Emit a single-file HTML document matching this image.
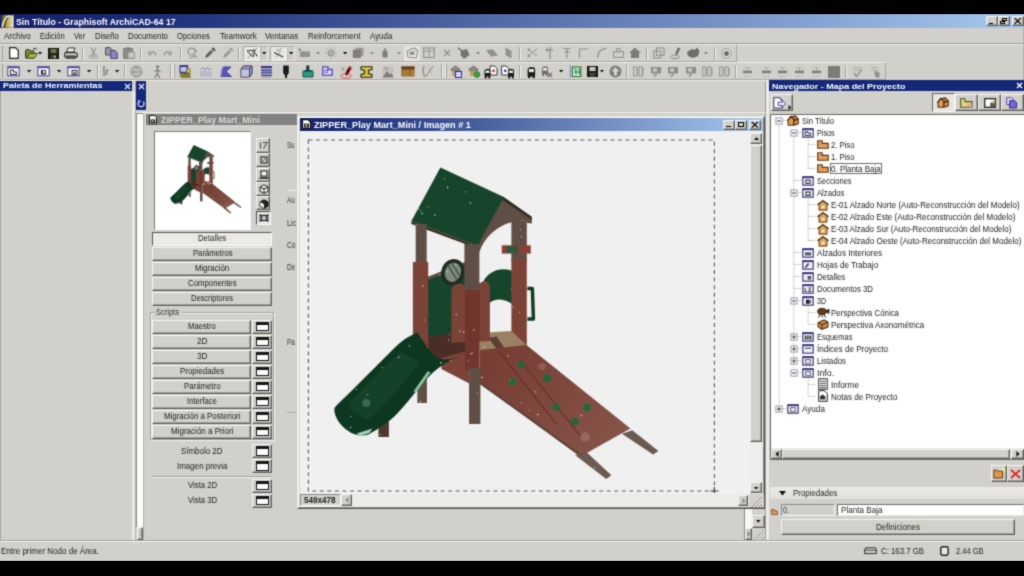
<!DOCTYPE html>
<html><head><meta charset="utf-8"><title>ArchiCAD</title>
<style>
html,body{margin:0;padding:0;background:#000;}
body{width:1024px;height:576px;position:relative;overflow:hidden;font-family:"Liberation Sans",sans-serif;}
.b{position:absolute;box-sizing:border-box;}
.t{position:absolute;white-space:nowrap;line-height:1;transform-origin:0 0;display:block;}
.raised{background:#d2d0cb;border:1px solid;border-color:#f4f4f2 #5e5e5a #5e5e5a #f4f4f2;box-shadow:inset -1px -1px 0 #a09e98;}
.sunk{border:1px solid;border-color:#7a7a76 #f8f8f6 #f8f8f6 #7a7a76;}
.sep{border-left:1px solid #a09e98;border-right:1px solid #f2f2f0;width:2px;}
#w{position:absolute;left:0;top:0;width:1024px;height:576px;overflow:hidden;filter:url(#blr);}
</style></head><body><svg width="0" height="0" style="position:absolute"><filter id="blr" x="0" y="0" width="1" height="1" color-interpolation-filters="sRGB"><feConvolveMatrix order="3" kernelMatrix="0.03 0.11 0.03 0.11 0.44 0.11 0.03 0.11 0.03" edgeMode="duplicate" preserveAlpha="true"/></filter></svg><div id="w">
<div class="b " style="left:0.0px;top:14.2px;width:1024.0px;height:546.8px;background:#d2d0cb"></div>
<div class="b " style="left:0.0px;top:14.2px;width:1024.0px;height:13.6px;background:linear-gradient(90deg,#171f6a 0%,#1b2c78 14%,#a6c8ee 100%)"></div>
<svg class="b" style="left:1.0px;top:15.0px" width="13" height="13" viewBox="0 0 13 13"><defs><linearGradient id="lg1" x1="0" x2="1" y1="0" y2="0"><stop offset="0" stop-color="#4a4a20"/><stop offset=".45" stop-color="#b8a850"/><stop offset="1" stop-color="#ece8d4"/></linearGradient></defs><rect x=".5" y=".3" width="12.2" height="12.4" fill="url(#lg1)"/><path d="M1.2 12.4 C2 6.5 4.5 2.2 8.4 .8" stroke="#f4f2ea" stroke-width="1.5" fill="none"/><path d="M3.4 12.4 C3.8 7.5 5.4 4 7.4 2.4" stroke="#4a3a1a" stroke-width="1.2" fill="none"/></svg>
<span class="t" style="left:15.5px;top:17px;font-size:9px;line-height:10px;color:#fff;font-weight:bold;transform:scaleX(0.969);">Sin Título - Graphisoft ArchiCAD-64 17</span>
<div class="b raised" style="left:986.0px;top:16.2px;width:11.6px;height:10.3px;"></div>
<div class="b " style="left:989.0px;top:22.7px;width:4.1px;height:1.2px;background:#000"></div>
<div class="b raised" style="left:997.8px;top:16.2px;width:12.2px;height:10.3px;"></div>
<div class="b " style="left:1002.3px;top:18.2px;width:5.2px;height:3.3px;border:1px solid #000;border-top-width:1.6px"></div>
<div class="b " style="left:1000.3px;top:20.7px;width:4.7px;height:3.3px;border:1px solid #000;border-top-width:1.6px;background:#d2d0cb"></div>
<div class="b raised" style="left:1011.8px;top:16.2px;width:11.8px;height:10.3px;"></div>
<svg class="b" style="left:1011.8px;top:16.2px" width="11.8" height="10.3" viewBox="0 0 11.8 10.3"><path d="M2.7 2.1500000000000004 L8.7 7.75 M8.7 2.1500000000000004 L2.7 7.75" stroke="#000" stroke-width="1.2" fill="none"/></svg>
<span class="t" style="left:4.3px;top:31px;font-size:9.2px;line-height:10px;color:#242424;transform:scaleX(0.867);">Archivo</span>
<span class="t" style="left:40.0px;top:31px;font-size:9.2px;line-height:10px;color:#242424;transform:scaleX(0.822);">Edición</span>
<span class="t" style="left:73.8px;top:31px;font-size:9.2px;line-height:10px;color:#242424;transform:scaleX(0.811);">Ver</span>
<span class="t" style="left:94.7px;top:31px;font-size:9.2px;line-height:10px;color:#242424;transform:scaleX(0.835);">Diseño</span>
<span class="t" style="left:128.0px;top:31px;font-size:9.2px;line-height:10px;color:#242424;transform:scaleX(0.850);">Documento</span>
<span class="t" style="left:177.3px;top:31px;font-size:9.2px;line-height:10px;color:#242424;transform:scaleX(0.846);">Opciones</span>
<span class="t" style="left:219.5px;top:31px;font-size:9.2px;line-height:10px;color:#242424;transform:scaleX(0.878);">Teamwork</span>
<span class="t" style="left:265.4px;top:31px;font-size:9.2px;line-height:10px;color:#242424;transform:scaleX(0.865);">Ventanas</span>
<span class="t" style="left:308.0px;top:31px;font-size:9.2px;line-height:10px;color:#242424;transform:scaleX(0.878);">Reinforcement</span>
<span class="t" style="left:370.0px;top:31px;font-size:9.2px;line-height:10px;color:#242424;transform:scaleX(0.864);">Ayuda</span>
<div class="b " style="left:0.0px;top:43.0px;width:1024.0px;height:1.0px;background:#9c9a94"></div>
<div class="b " style="left:0.0px;top:44.0px;width:1024.0px;height:1.0px;background:#ecebe7"></div>
<div class="b " style="left:0.0px;top:61.0px;width:736.0px;height:1.0px;background:#a8a6a0"></div>
<div class="b " style="left:0.0px;top:62.0px;width:736.0px;height:1.0px;background:#eeede9"></div>
<div class="b " style="left:736.0px;top:45.0px;width:1.0px;height:17.0px;background:#a8a6a0"></div>
<div class="b " style="left:737.0px;top:62.2px;width:148.0px;height:1.0px;background:#e9e8e4"></div>
<div class="b " style="left:0.0px;top:79.0px;width:885.0px;height:1.0px;background:#a8a6a0"></div>
<div class="b " style="left:885.0px;top:63.0px;width:1.0px;height:17.0px;background:#a8a6a0"></div>
<div class="b " style="left:0.0px;top:80.0px;width:1024.0px;height:0.6px;background:#eeede9"></div>
<div class="b " style="left:1022.8px;top:28.0px;width:1.2px;height:52.0px;background:#b4b2ac"></div>
<div class="b " style="left:1.5px;top:46.0px;width:1.5px;height:14.0px;background:#f2f2f0;border-right:1px solid #a09e98"></div>
<div class="b " style="left:1.5px;top:64.0px;width:1.5px;height:14.0px;background:#f2f2f0;border-right:1px solid #a09e98"></div>
<div class="b sep" style="left:82.0px;top:46.5px;width:2.0px;height:13.0px;"></div>
<div class="b sep" style="left:140.0px;top:46.5px;width:2.0px;height:13.0px;"></div>
<div class="b sep" style="left:180.0px;top:46.5px;width:2.0px;height:13.0px;"></div>
<div class="b sep" style="left:238.0px;top:46.5px;width:2.0px;height:13.0px;"></div>
<div class="b sep" style="left:519.0px;top:46.5px;width:2.0px;height:13.0px;"></div>
<div class="b sep" style="left:646.0px;top:46.5px;width:2.0px;height:13.0px;"></div>
<div class="b sep" style="left:714.0px;top:46.5px;width:2.0px;height:13.0px;"></div>
<div class="b sep" style="left:97.0px;top:64.5px;width:2.0px;height:13.0px;"></div>
<div class="b sep" style="left:124.0px;top:64.5px;width:2.0px;height:13.0px;"></div>
<div class="b sep" style="left:170.0px;top:64.5px;width:2.0px;height:13.0px;"></div>
<div class="b sep" style="left:441.0px;top:64.5px;width:2.0px;height:13.0px;"></div>
<div class="b sep" style="left:519.0px;top:64.5px;width:2.0px;height:13.0px;"></div>
<div class="b sep" style="left:626.0px;top:64.5px;width:2.0px;height:13.0px;"></div>
<div class="b sep" style="left:735.0px;top:64.5px;width:2.0px;height:13.0px;"></div>
<div class="b sep" style="left:845.0px;top:64.5px;width:2.0px;height:13.0px;"></div>
<div class="b " style="left:173.0px;top:64.0px;width:2.0px;height:14.0px;background:#f2f2f0;border-right:1px solid #a09e98"></div>
<div class="b " style="left:445.0px;top:64.0px;width:2.0px;height:14.0px;background:#f2f2f0;border-right:1px solid #a09e98"></div>
<svg class="b" style="left:9.0px;top:47.0px" width="10" height="12" viewBox="0 0 10 12"><path d="M.7 .7 L6.5 .7 L9.3 3.5 L9.3 11.3 L.7 11.3 Z" fill="#fff" stroke="#222" stroke-width="1.2"/></svg>
<svg class="b" style="left:25.0px;top:47.0px" width="13" height="12" viewBox="0 0 13 12"><path d="M.5 4 L.5 11 L9 11 L9 4 L5 4 L4 2.5 L1.5 2.5 Z" fill="#7a8a30" stroke="#3a4018" stroke-width="1"/><path d="M2 11 L4.5 6.5 L12.5 6.5 L9.5 11 Z" fill="#a8b848" stroke="#3a4018" stroke-width=".9"/><path d="M8 2.5 C9.5 .8 11 1 11.8 2.6" stroke="#222" fill="none" stroke-width="1"/></svg>
<svg class="b" style="left:38.4px;top:52.2px" width="4.2" height="2.52" viewBox="0 0 4.2 2.52"><path d="M0 0 L4.2 0 L2.1 2.52 Z" fill="#111"/></svg>
<svg class="b" style="left:48.0px;top:47.5px" width="11" height="11" viewBox="0 0 11 11"><rect x=".5" y=".5" width="10" height="10" fill="#20221a" stroke="#111"/><rect x="2.5" y="1" width="6" height="4" fill="#6e7a3a"/><rect x="3" y="7" width="5" height="3.5" fill="#444a30"/><rect x="6.3" y="7.6" width="1.3" height="2.4" fill="#d0d0c0"/></svg>
<svg class="b" style="left:64.0px;top:47.0px" width="14" height="12" viewBox="0 0 14 12"><path d="M4 1 L11 1 L9.5 5 L2.5 5 Z" fill="#f4f4f4" stroke="#222" stroke-width=".9"/><path d="M1 5.5 L12.5 5.5 L13.3 7 L13.3 10 L.7 10 L.7 7 Z" fill="#b8b8b4" stroke="#222" stroke-width="1"/><rect x="2.5" y="9" width="9" height="2.3" fill="#555" stroke="#222" stroke-width=".6"/></svg>
<svg class="b" style="left:89.0px;top:47.0px" width="9" height="12" viewBox="0 0 9 12"><path d="M2 .5 L6 8 M7 .5 L3 8" stroke="#939190" stroke-width="1.1" fill="none"/><circle cx="2.4" cy="9.6" r="1.7" fill="none" stroke="#939190" stroke-width="1"/><circle cx="6.6" cy="9.6" r="1.7" fill="none" stroke="#939190" stroke-width="1"/></svg>
<svg class="b" style="left:105.0px;top:47.0px" width="13" height="12" viewBox="0 0 13 12"><path d="M.6 .6 L5 .6 L7 2.6 L7 8 L.6 8 Z" fill="#9c9aa8" stroke="#444" stroke-width=".9"/><path d="M5.6 3.6 L10 3.6 L12.3 5.8 L12.3 11.4 L5.6 11.4 Z" fill="#8a88c0" stroke="#3a3a70" stroke-width=".9"/></svg>
<svg class="b" style="left:123.0px;top:47.0px" width="12" height="12" viewBox="0 0 12 12"><rect x=".6" y="1.6" width="9" height="9.6" fill="#8e8c88" stroke="#777" stroke-width=".9"/><rect x="3" y=".5" width="4" height="2" fill="#777"/><rect x="5" y="5" width="6.4" height="6.4" fill="#c8c6c2" stroke="#888" stroke-width=".8"/></svg>
<svg class="b" style="left:147.0px;top:49.0px" width="10" height="8" viewBox="0 0 10 8"><path d="M2 2 L2 5.5 L5.5 5.5" stroke="#939190" fill="none" stroke-width="1.1"/><path d="M2 5.5 C4 1.5 8.5 2 8.8 6.5" stroke="#939190" fill="none" stroke-width="1.2"/></svg>
<svg class="b" style="left:163.0px;top:49.0px" width="10" height="8" viewBox="0 0 10 8"><path d="M8 2 L8 5.5 L4.5 5.5" stroke="#939190" fill="none" stroke-width="1.1"/><path d="M8 5.5 C6 1.5 1.5 2 1.2 6.5" stroke="#939190" fill="none" stroke-width="1.2"/></svg>
<svg class="b" style="left:187.0px;top:47.0px" width="11" height="12" viewBox="0 0 11 12"><circle cx="4.5" cy="4.5" r="3.4" fill="none" stroke="#939190" stroke-width="1.1"/><path d="M6.5 7 L10 11 M2 11 L9 9 M8 2 L10 5" stroke="#939190" stroke-width="1.1"/></svg>
<svg class="b" style="left:204.0px;top:47.0px" width="12" height="12" viewBox="0 0 12 12"><path d="M1 11 L2 8 L7 3 L9 5 L4 10 Z" fill="#5c5a58"/><path d="M7 1.5 L10.5 5 L11.5 2.5 L9.5 .5 Z" fill="#5c5a58"/></svg>
<svg class="b" style="left:222.0px;top:47.0px" width="11" height="12" viewBox="0 0 11 12"><path d="M1 11 L2 8 L7 3 L9 5 L4 10 Z" fill="#9a9894"/><path d="M7 1.5 L10.5 5 L11 2.5 L9.5 .8 Z" fill="#9a9894"/></svg>
<div class="b " style="left:243.0px;top:45.5px;width:17.0px;height:15.0px;background:#e6e5e2;border:1px solid;border-color:#a8a6a0 #f4f4f2 #f4f4f2 #a8a6a0"></div>
<div class="b " style="left:260.0px;top:45.5px;width:8.0px;height:15.0px;background:#cecCc6;border:1px solid;border-color:#b4b2ac #e8e7e3 #e8e7e3 #b4b2ac"></div>
<div class="b " style="left:270.0px;top:45.5px;width:17.0px;height:15.0px;background:#e6e5e2;border:1px solid;border-color:#a8a6a0 #f4f4f2 #f4f4f2 #a8a6a0"></div>
<div class="b " style="left:287.0px;top:45.5px;width:8.0px;height:15.0px;background:#cecCc6;border:1px solid;border-color:#b4b2ac #e8e7e3 #e8e7e3 #b4b2ac"></div>
<svg class="b" style="left:246.0px;top:47.0px" width="13" height="12" viewBox="0 0 13 12"><path d="M1 4 L9 3 L7 10 Z" fill="none" stroke="#333" stroke-width="1"/><path d="M2 11 L11 1 M6 5 L11 8" stroke="#555" stroke-width=".9" stroke-dasharray="1.5 1"/><path d="M9.5 5.5 L11.5 9.5 L10 9 Z" fill="#111"/></svg>
<svg class="b" style="left:261.9px;top:52.2px" width="4.2" height="2.52" viewBox="0 0 4.2 2.52"><path d="M0 0 L4.2 0 L2.1 2.52 Z" fill="#111"/></svg>
<svg class="b" style="left:272.0px;top:47.0px" width="13" height="12" viewBox="0 0 13 12"><path d="M2 5.5 L11 10" stroke="#333" stroke-width="1.1"/><path d="M4 10 L9 4" stroke="#777" stroke-width=".8"/><path d="M4.5 2.5 L6.5 4 L9.5 1" stroke="#777" fill="none" stroke-width=".9"/></svg>
<svg class="b" style="left:288.9px;top:52.2px" width="4.2" height="2.52" viewBox="0 0 4.2 2.52"><path d="M0 0 L4.2 0 L2.1 2.52 Z" fill="#111"/></svg>
<svg class="b" style="left:298.0px;top:47.0px" width="13" height="12" viewBox="0 0 13 12"><rect x="2" y="4.5" width="10" height="5.5" fill="#939190"/><rect x=".5" y="1.5" width="2.5" height="2.5" fill="#939190"/></svg>
<svg class="b" style="left:316.0px;top:52.3px" width="4.0" height="2.4000000000000004" viewBox="0 0 4.0 2.4000000000000004"><path d="M0 0 L4.0 0 L2.0 2.4000000000000004 Z" fill="#8a8884"/></svg>
<svg class="b" style="left:325.0px;top:47.0px" width="12" height="12" viewBox="0 0 12 12"><circle cx="6" cy="6" r="3" fill="none" stroke="#939190" stroke-width="1"/><path d="M6 0 L6 12 M0 6 L12 6 M1.8 1.8 L10.2 10.2 M10.2 1.8 L1.8 10.2" stroke="#939190" stroke-width=".8" stroke-dasharray="2 1.2"/></svg>
<svg class="b" style="left:342.9px;top:52.2px" width="4.2" height="2.52" viewBox="0 0 4.2 2.52"><path d="M0 0 L4.2 0 L2.1 2.52 Z" fill="#111"/></svg>
<svg class="b" style="left:352.0px;top:47.0px" width="12" height="12" viewBox="0 0 12 12"><rect x="3.5" y=".8" width="8" height="8" fill="#9a9894"/><rect x=".8" y="2.8" width="8.2" height="8.2" fill="#807e7a"/></svg>
<svg class="b" style="left:370.0px;top:52.3px" width="4.0" height="2.4000000000000004" viewBox="0 0 4.0 2.4000000000000004"><path d="M0 0 L4.0 0 L2.0 2.4000000000000004 Z" fill="#8a8884"/></svg>
<svg class="b" style="left:382.0px;top:48.0px" width="6" height="10" viewBox="0 0 6 10"><rect x="1.8" y="0" width="2.4" height="3" fill="#939190"/><rect x=".5" y="3" width="5" height="6.5" fill="#7e7c78"/></svg>
<svg class="b" style="left:397.0px;top:52.3px" width="4.0" height="2.4000000000000004" viewBox="0 0 4.0 2.4000000000000004"><path d="M0 0 L4.0 0 L2.0 2.4000000000000004 Z" fill="#8a8884"/></svg>
<div class="b " style="left:404.0px;top:45.5px;width:16.0px;height:15.0px;background:#e4e3df"></div>
<svg class="b" style="left:406.0px;top:47.0px" width="13" height="12" viewBox="0 0 13 12"><path d="M1 4 L8 1 L12 4 L10 11 L2 10 Z" fill="none" stroke="#939190" stroke-width="1.1"/><path d="M3 5 L9 4 L8 8 L4 8 Z" fill="#939190"/></svg>
<svg class="b" style="left:423.0px;top:47.0px" width="12" height="12" viewBox="0 0 12 12"><rect x=".6" y="1" width="10.8" height="9.5" fill="none" stroke="#939190" stroke-width="1.1"/><path d="M6 1 L6 10.5 M.6 4 L11.4 4" stroke="#939190" stroke-width="1"/></svg>
<svg class="b" style="left:443.0px;top:49.0px" width="8" height="8" viewBox="0 0 8 8"><path d="M1 1 L7 7 M7 1 L1 7" stroke="#939190" stroke-width="1.3"/><rect x="2.8" y="2.8" width="2.4" height="2.4" fill="#939190"/></svg>
<svg class="b" style="left:457.0px;top:46.5px" width="13" height="13" viewBox="0 0 13 13"><path d="M4 3.5 L10 2 L12.5 8 L7 12 L3.5 8 Z" fill="#74726e"/><path d="M1 .8 L5 4" stroke="#74726e" stroke-width="1.6"/></svg>
<svg class="b" style="left:476.0px;top:52.3px" width="4.0" height="2.4000000000000004" viewBox="0 0 4.0 2.4000000000000004"><path d="M0 0 L4.0 0 L2.0 2.4000000000000004 Z" fill="#8a8884"/></svg>
<svg class="b" style="left:486.0px;top:49.0px" width="12" height="8" viewBox="0 0 12 8"><path d="M0 1 L7 .5 L12 6.5 L5 7.5 Z" fill="#939190"/></svg>
<svg class="b" style="left:505.0px;top:47.0px" width="7" height="12" viewBox="0 0 7 12"><path d="M.5 .5 L6.5 4 L6.5 11.5 L.5 8 Z" fill="#939190"/></svg>
<svg class="b" style="left:527.0px;top:48.0px" width="11" height="10" viewBox="0 0 11 10"><path d="M1 1 L10 8 M1 8 L10 1" stroke="#939190" stroke-width="1"/><circle cx="1.8" cy="1.8" r="1.3" fill="#939190"/><circle cx="1.8" cy="8" r="1.3" fill="#939190"/></svg>
<svg class="b" style="left:546.0px;top:47.0px" width="8" height="12" viewBox="0 0 8 12"><path d="M4 0 L4 12 M1 3 L7 3" stroke="#939190" stroke-width="1.3"/><path d="M0 1 L3 3 L0 5 Z" fill="#939190"/></svg>
<svg class="b" style="left:563.0px;top:47.0px" width="8" height="12" viewBox="0 0 8 12"><path d="M0 1.5 L8 1.5 M4 1.5 L4 11 M1 5 L7 5" stroke="#939190" stroke-width="1.2"/></svg>
<svg class="b" style="left:578.0px;top:47.0px" width="11" height="12" viewBox="0 0 11 12"><path d="M1.5 11 L1.5 2 L10.5 2" stroke="#939190" stroke-width="1.2" fill="none"/></svg>
<svg class="b" style="left:596.0px;top:47.0px" width="11" height="12" viewBox="0 0 11 12"><path d="M1.5 11 C1.5 5 5 1.5 10.5 1.5" stroke="#939190" stroke-width="1.3" fill="none"/></svg>
<svg class="b" style="left:613.0px;top:48.0px" width="11" height="10" viewBox="0 0 11 10"><rect x=".6" y="3.6" width="9.8" height="5.8" fill="none" stroke="#939190" stroke-width="1.1"/><rect x="3.5" y=".6" width="3.5" height="3" fill="none" stroke="#939190" stroke-width="1"/></svg>
<svg class="b" style="left:629.0px;top:47.0px" width="12" height="12" viewBox="0 0 12 12"><path d="M6 .5 L12 6 L10 6 L10 11 L2 11 L2 6 L0 6 Z" fill="#7c7a76"/></svg>
<svg class="b" style="left:653.0px;top:47.0px" width="12" height="12" viewBox="0 0 12 12"><rect x="3.5" y="1" width="7.5" height="7.5" fill="none" stroke="#939190" stroke-width="1.1"/><rect x=".8" y="4" width="7" height="7" fill="none" stroke="#939190" stroke-width="1.1"/></svg>
<svg class="b" style="left:670.0px;top:46.5px" width="12" height="13" viewBox="0 0 12 13"><path d="M8 .5 L10.5 1.5 L7 8 L5 7.2 Z" fill="#6a6864"/><ellipse cx="5" cy="10" rx="4.6" ry="1.8" fill="none" stroke="#939190" stroke-width="1"/></svg>
<svg class="b" style="left:687.0px;top:47.0px" width="13" height="12" viewBox="0 0 13 12"><path d="M0 5 L5 2 L8 3 L10 .5 L12.5 4 L11 9 L6 11 L1 9 Z" fill="#6e6c68"/></svg>
<svg class="b" style="left:704.0px;top:52.3px" width="4.0" height="2.4000000000000004" viewBox="0 0 4.0 2.4000000000000004"><path d="M0 0 L4.0 0 L2.0 2.4000000000000004 Z" fill="#8a8884"/></svg>
<svg class="b" style="left:720.5px;top:48.0px" width="11" height="11" viewBox="0 0 11 11"><circle cx="5.5" cy="5.5" r="4.7" fill="#e2e1dd" stroke="#939190" stroke-width="1"/><circle cx="5.5" cy="5.5" r="2.5" fill="#6e6c68"/></svg>
<svg class="b" style="left:7.0px;top:65.8px" width="13" height="11" viewBox="0 0 13 11"><rect x=".8" y=".8" width="11.4" height="9" fill="#f0f0f6" stroke="#504e9e" stroke-width="1.1"/><rect x=".8" y=".5" width="11.4" height="1.7" fill="#504e9e"/><path d="M3.5 4 L6.5 4 L6.5 6 L9.5 6 L9.5 8.5 L3.5 8.5 Z" fill="none" stroke="#222" stroke-width=".9"/></svg>
<svg class="b" style="left:27.4px;top:70.2px" width="4.2" height="2.52" viewBox="0 0 4.2 2.52"><path d="M0 0 L4.2 0 L2.1 2.52 Z" fill="#111"/></svg>
<svg class="b" style="left:37.0px;top:65.8px" width="13" height="11" viewBox="0 0 13 11"><rect x=".8" y=".8" width="11.4" height="9" fill="#f0f0f6" stroke="#504e9e" stroke-width="1.1"/><rect x=".8" y=".5" width="11.4" height="1.7" fill="#504e9e"/><path d="M4 4 L9 4 L9 8.5 L4 8.5 Z" fill="#222"/><circle cx="7" cy="6" r="1.4" fill="#ddd"/></svg>
<svg class="b" style="left:57.4px;top:70.2px" width="4.2" height="2.52" viewBox="0 0 4.2 2.52"><path d="M0 0 L4.2 0 L2.1 2.52 Z" fill="#111"/></svg>
<svg class="b" style="left:67.0px;top:65.8px" width="13" height="11" viewBox="0 0 13 11"><rect x=".8" y=".8" width="11.4" height="9" fill="#f0f0f6" stroke="#504e9e" stroke-width="1.1"/><rect x=".8" y=".5" width="11.4" height="1.7" fill="#504e9e"/><rect x="5" y="4.5" width="5" height="4" fill="none" stroke="#222" stroke-width=".9"/><rect x="6.5" y="6" width="2" height="1.5" fill="#222"/></svg>
<svg class="b" style="left:87.4px;top:70.2px" width="4.2" height="2.52" viewBox="0 0 4.2 2.52"><path d="M0 0 L4.2 0 L2.1 2.52 Z" fill="#111"/></svg>
<svg class="b" style="left:102.0px;top:66.0px" width="7" height="10" viewBox="0 0 7 10"><path d="M1 1 L3 1 M2 1 L2 9 M1 9 L3.2 9 M4.5 9 L4.5 4 M4.5 5 C5 4 6 4 6.5 4.3" stroke="#6c6a66" stroke-width="1.1" fill="none"/></svg>
<svg class="b" style="left:115.4px;top:70.2px" width="4.2" height="2.52" viewBox="0 0 4.2 2.52"><path d="M0 0 L4.2 0 L2.1 2.52 Z" fill="#111"/></svg>
<svg class="b" style="left:130.0px;top:65.0px" width="13" height="13" viewBox="0 0 13 13"><circle cx="6.5" cy="6.5" r="5.6" fill="#a8a6a2" stroke="#939190" stroke-width=".9"/><path d="M2 5 C4 3 6 7 8 5 S11 6 11.5 5 M3 9.5 C5 8 8 10 10 8.5" stroke="#dcdad6" stroke-width="1" fill="none"/></svg>
<svg class="b" style="left:153.0px;top:64.5px" width="9" height="14" viewBox="0 0 9 14"><circle cx="4.6" cy="1.8" r="1.5" fill="#7e7c78"/><path d="M4.6 3.5 L4.3 8 L2 13 M4.3 8 L6.8 13 M1.5 6.5 L4.5 4.8 L7.5 7" stroke="#7e7c78" stroke-width="1.2" fill="none"/></svg>
<svg class="b" style="left:179.0px;top:65.0px" width="12" height="13" viewBox="0 0 12 13"><rect x="1" y=".8" width="7.5" height="6.5" fill="#c8c8e8" stroke="#34348c" stroke-width="1.2"/><rect x="1" y=".5" width="7.5" height="1.6" fill="#34348c"/><path d="M1 8.5 L10 8.5 L11.5 10 L2.5 10 Z M1 10.8 L10 10.8 L11.5 12.3 L2.5 12.3 Z" fill="#b8a838" stroke="#4a4410" stroke-width=".7"/><rect x="7.5" y="4" width="3.5" height="4" fill="#d8c850" stroke="#4a4410" stroke-width=".6"/></svg>
<svg class="b" style="left:200.0px;top:66.0px" width="12" height="11" viewBox="0 0 12 11"><path d="M.5 4 L3 1.5 L5 4 L7.5 1.5 L9.5 4 L11.5 2" stroke="#7a8ac0" fill="none" stroke-width="1"/><path d="M.5 6 L11.5 6 M.5 8.3 L11.5 8.3" stroke="#7a8ac0" stroke-width="1" stroke-dasharray="1.6 .8"/><path d="M.5 10.3 L11.5 10.3" stroke="#9aa6d0" stroke-width=".8"/></svg>
<svg class="b" style="left:220.0px;top:65.5px" width="12" height="12" viewBox="0 0 12 12"><path d="M3 1 L11 1 L6 5.5 L11.5 10.5 L1 10.5 Z" fill="#5a54c0" stroke="#34348c" stroke-width=".8"/><path d="M1 10.5 C1 6 2 3 3 1" fill="none" stroke="#8a84e0" stroke-width="1.2"/></svg>
<svg class="b" style="left:239.5px;top:65.0px" width="13" height="13" viewBox="0 0 13 13"><path d="M1 4 L3.5 1 L12 1 L12 9 L9.5 12 L1 12 Z" fill="#a8a8cc" stroke="#2a2a5a" stroke-width="1"/><path d="M1 4 L9.5 4 L9.5 12 M9.5 4 L12 1" fill="none" stroke="#2a2a5a" stroke-width=".9"/><rect x="1.5" y="4.5" width="7.5" height="7" fill="#c4c4e0"/></svg>
<svg class="b" style="left:261.0px;top:65.5px" width="11" height="12" viewBox="0 0 11 12"><rect x="0" y="0" width="11" height="2.2" fill="#34348c"/><rect x="0" y="3.2" width="11" height="4.6" fill="#5a5aa0"/><path d="M0 5.5 L11 5.5" stroke="#c8c8e0" stroke-width=".8" stroke-dasharray="1.5 1"/><rect x="0" y="8.8" width="11" height="1.2" fill="#34348c"/><rect x="1" y="10.6" width="9" height="1" fill="#8a8ac0"/></svg>
<svg class="b" style="left:282.0px;top:64.5px" width="8" height="14" viewBox="0 0 8 14"><path d="M1.2 .5 L6.8 .5 L6.8 8 L5 10.5 L5 13 L3 13 L3 10.5 L1.2 8 Z" fill="#1a1a1a"/></svg>
<svg class="b" style="left:302.0px;top:65.0px" width="12" height="13" viewBox="0 0 12 13"><rect x="4.3" y=".5" width="3" height="4.5" fill="#1a3030"/><path d="M1 6 L11 6 L11 12 L1 12 Z" fill="#2a9a86" stroke="#0e4a40" stroke-width=".9"/><rect x="2.5" y="5" width="7" height="1.5" fill="#0e4a40"/></svg>
<svg class="b" style="left:322.0px;top:66.0px" width="11" height="10" viewBox="0 0 11 10"><path d="M.8 .8 L6 .8 L6 3.5 L10.2 3.5 L10.2 9.2 L.8 9.2 Z" fill="#e4e4f4" stroke="#4a44c0" stroke-width="1.3"/><rect x="3" y="4" width="2.5" height="2.5" fill="none" stroke="#4a44c0" stroke-width=".8"/></svg>
<svg class="b" style="left:340.0px;top:64.5px" width="13" height="14" viewBox="0 0 13 14"><ellipse cx="6" cy="11" rx="5" ry="2.2" fill="none" stroke="#e05050" stroke-width="1"/><path d="M9.5 .8 L12 3 L7 11 L5 9.5 Z" fill="#b01818"/><path d="M8 3 L10 5 L7.5 9 L5.5 8 Z" fill="#3a1010"/><path d="M1 2 L5 6 M5 2 L1 6" stroke="#888" stroke-width=".8"/></svg>
<svg class="b" style="left:360.0px;top:65.5px" width="13" height="12" viewBox="0 0 13 12"><path d="M1 .8 L12 .8 L12 3.6 L8.5 4.4 L8.5 7.6 L12 8.4 L12 11.2 L1 11.2 L1 8.4 L4.5 7.6 L4.5 4.4 L1 3.6 Z" fill="#d8c048" stroke="#2a2408" stroke-width="1.1"/></svg>
<svg class="b" style="left:382.0px;top:65.5px" width="12" height="12" viewBox="0 0 12 12"><rect x=".5" y=".5" width="11" height="11" fill="#c2c0bc"/><path d="M.5 11.5 L5 5 L8 8.5 L9.5 7 L11.5 11.5 Z" fill="#7e7c78"/><path d="M2 1 L4 4 M5 .8 L5.5 3.5" stroke="#8a8884" stroke-width=".9"/></svg>
<svg class="b" style="left:401.0px;top:66.0px" width="14" height="11" viewBox="0 0 14 11"><rect x=".5" y=".5" width="13" height="10" fill="#8a5a28"/><rect x=".5" y=".5" width="13" height="2.6" fill="#6a3e18"/><path d="M2 5 L8 5 M2 7 L8 7 M2 9 L8 9" stroke="#e0c850" stroke-width="1.2" stroke-dasharray="1.4 .8"/><rect x="9" y="4" width="4" height="6" fill="#a87838"/></svg>
<svg class="b" style="left:421.0px;top:65.0px" width="13" height="13" viewBox="0 0 13 13"><path d="M3 1 C1.5 5 2 9 4 12" stroke="#939190" fill="none" stroke-width="1.6"/><path d="M12 1 L5 11.5" stroke="#939190" stroke-width="1.2"/><path d="M7 2 L12 11" stroke="#a6a4a0" stroke-width=".9" stroke-dasharray="1.5 1"/></svg>
<svg class="b" style="left:450.0px;top:65.0px" width="13" height="13" viewBox="0 0 13 13"><path d="M.5 4.5 L5.5 .8 L10.5 4.5 L9.5 4.5 L9.5 6 L1.5 6 L1.5 4.5 Z" fill="#8c8a84" stroke="#666" stroke-width=".6"/><rect x="2" y="6" width="6.5" height="5" fill="#c0a070"/><rect x="5.5" y="6.5" width="6" height="6" fill="#d8d8f8" stroke="#3030a0" stroke-width="1.1"/></svg>
<svg class="b" style="left:467.5px;top:65.0px" width="13" height="13" viewBox="0 0 13 13"><path d="M.5 4.5 L5.5 .8 L10.5 4.5 L9.5 4.5 L9.5 6 L1.5 6 L1.5 4.5 Z" fill="#8c8a84" stroke="#666" stroke-width=".6"/><rect x="2" y="6" width="6.5" height="5" fill="#c89858"/><circle cx="9" cy="9.5" r="2.8" fill="#38a848" stroke="#186828" stroke-width=".8"/></svg>
<svg class="b" style="left:484.0px;top:64.5px" width="14" height="14" viewBox="0 0 14 14"><g transform="translate(5.5 0.5)"><path d="M.5 .5 L5 .5 L7.5 3 L7.5 9.5 L.5 9.5 Z" fill="#fff" stroke="#222" stroke-width=".9"/><rect x="2.8" y="4" width="2.4" height="2.6" fill="#d03030"/></g><g transform="translate(0 3.5)"><path d="M.5 8 L.5 2 L2 .5 L5.5 .5 L6.5 2 L6.5 8 Z" fill="#1a1a1a"/><rect x="1.5" y="2" width="4" height="2.5" fill="#e8e8e8"/><rect x=".8" y="7.5" width="1.8" height="2.5" fill="#1a1a1a"/><rect x="4.4" y="7.5" width="1.8" height="2.5" fill="#1a1a1a"/></g></svg>
<svg class="b" style="left:501.0px;top:64.5px" width="14" height="14" viewBox="0 0 14 14"><g transform="translate(0.2 0.5)"><path d="M.5 .5 L5 .5 L7.5 3 L7.5 9.5 L.5 9.5 Z" fill="#fff" stroke="#222" stroke-width=".9"/><rect x="2.8" y="4" width="2.4" height="2.6" fill="#3050c0"/></g><g transform="translate(6.5 3.5)"><path d="M.5 8 L.5 2 L2 .5 L5.5 .5 L6.5 2 L6.5 8 Z" fill="#1a1a1a"/><rect x="1.5" y="2" width="4" height="2.5" fill="#e8e8e8"/><rect x=".8" y="7.5" width="1.8" height="2.5" fill="#1a1a1a"/><rect x="4.4" y="7.5" width="1.8" height="2.5" fill="#1a1a1a"/></g></svg>
<svg class="b" style="left:526.0px;top:65.0px" width="11" height="13" viewBox="0 0 11 13"><g transform="translate(1 1.5) scale(1.25)"><path d="M.5 8 L.5 2 L2 .5 L5.5 .5 L6.5 2 L6.5 8 Z" fill="#1a1a1a"/><rect x="1.5" y="2" width="4" height="2.5" fill="#e8e8e8"/><rect x=".8" y="7.5" width="1.8" height="2.5" fill="#1a1a1a"/><rect x="4.4" y="7.5" width="1.8" height="2.5" fill="#1a1a1a"/></g></svg>
<svg class="b" style="left:541.0px;top:65.0px" width="12" height="13" viewBox="0 0 12 13"><g transform="translate(0.5 1)"><path d="M.5 8 L.5 2 L2 .5 L5.5 .5 L6.5 2 L6.5 8 Z" fill="#6e6c68"/><rect x="1.5" y="2" width="4" height="2.5" fill="#e8e8e8"/><rect x=".8" y="7.5" width="1.8" height="2.5" fill="#6e6c68"/><rect x="4.4" y="7.5" width="1.8" height="2.5" fill="#6e6c68"/></g><path d="M7 8 L11 12 M11 8 L7 12" stroke="#6e6c68" stroke-width="1.2"/></svg>
<svg class="b" style="left:558.9px;top:70.2px" width="4.2" height="2.52" viewBox="0 0 4.2 2.52"><path d="M0 0 L4.2 0 L2.1 2.52 Z" fill="#111"/></svg>
<svg class="b" style="left:568.5px;top:65.0px" width="13" height="13" viewBox="0 0 13 13"><rect x="3.5" y="2" width="8.5" height="9.5" fill="#e8f4e8" stroke="#1a7a2a" stroke-width="1.1"/><path d="M1.5 .5 L1.5 12.5" stroke="#5a54c0" stroke-width="1.2" stroke-dasharray="1.5 1"/><path d="M5 4 L7 4 L7 10 M9 4 L10.5 4 L10.5 10 M5 7 L10.5 7" stroke="#1a7a2a" stroke-width="1.1" fill="none"/></svg>
<svg class="b" style="left:587.0px;top:65.5px" width="11" height="11" viewBox="0 0 11 11"><rect x=".5" y=".5" width="10" height="10" fill="#20221a" stroke="#111"/><rect x="2.5" y="1" width="6" height="4" fill="#c8ccc0"/><rect x="3" y="7" width="5" height="3.5" fill="#444a30"/></svg>
<svg class="b" style="left:599.5px;top:70.3px" width="4.0" height="2.4000000000000004" viewBox="0 0 4.0 2.4000000000000004"><path d="M0 0 L4.0 0 L2.0 2.4000000000000004 Z" fill="#111"/></svg>
<svg class="b" style="left:609.0px;top:65.0px" width="13" height="13" viewBox="0 0 13 13"><circle cx="6.5" cy="6.5" r="6" fill="#7e7c78"/><path d="M6.5 2 L10.5 6.5 L8 6.5 L8 10.5 L5 10.5 L5 6.5 L2.5 6.5 Z" fill="#d4d2cc"/></svg>
<svg class="b" style="left:633.0px;top:65.0px" width="11" height="13" viewBox="0 0 11 13"><rect x=".6" y="2" width="3.2" height="9" fill="none" stroke="#939190" stroke-width="1"/><rect x="6" y="2" width="3.2" height="9" fill="none" stroke="#939190" stroke-width="1"/><path d="M3.8 5 L6 5 M3.8 8 L6 8 M10 3 L10 10" stroke="#939190" stroke-width="1"/></svg>
<svg class="b" style="left:650.0px;top:65.5px" width="12" height="12" viewBox="0 0 12 12"><rect x="1" y="1" width="10" height="6.5" fill="#8e8c88"/><rect x="3" y="2.3" width="4" height="3.5" fill="#c8c6c2"/><path d="M5 7.5 L4 11 L7 8.5" fill="#8e8c88" stroke="#939190" stroke-width=".8"/></svg>
<svg class="b" style="left:667.0px;top:65.5px" width="12" height="12" viewBox="0 0 12 12"><rect x="1" y="1" width="10" height="6.5" fill="#8e8c88"/><rect x="3" y="2.3" width="4" height="3.5" fill="#c8c6c2"/><path d="M5 7.5 L4 11 L7 8.5" fill="#8e8c88" stroke="#939190" stroke-width=".8"/></svg>
<svg class="b" style="left:685.0px;top:65.5px" width="12" height="12" viewBox="0 0 12 12"><rect x="1" y="1" width="10" height="6.5" fill="#8e8c88"/><rect x="3" y="2.3" width="4" height="3.5" fill="#c8c6c2"/><path d="M5 7.5 L4 11 L7 8.5" fill="#8e8c88" stroke="#939190" stroke-width=".8"/></svg>
<svg class="b" style="left:702.0px;top:65.0px" width="11" height="13" viewBox="0 0 11 13"><rect x=".6" y="2" width="3.2" height="9" fill="none" stroke="#939190" stroke-width="1"/><rect x="6" y="2" width="3.2" height="9" fill="none" stroke="#939190" stroke-width="1"/><path d="M3.8 5 L6 5 M3.8 8 L6 8 M10 3 L10 10" stroke="#939190" stroke-width="1"/></svg>
<svg class="b" style="left:719.0px;top:65.0px" width="11" height="13" viewBox="0 0 11 13"><rect x=".6" y="2" width="3.2" height="9" fill="none" stroke="#939190" stroke-width="1"/><rect x="6" y="2" width="3.2" height="9" fill="none" stroke="#939190" stroke-width="1"/><path d="M3.8 5 L6 5 M3.8 8 L6 8 M10 3 L10 10" stroke="#939190" stroke-width="1"/></svg>
<svg class="b" style="left:742.0px;top:65.5px" width="11" height="12" viewBox="0 0 11 12"><path d="M2 1.5 L9 1.5 M2 10.5 L9 10.5" stroke="#aaa8a4" stroke-width=".9" stroke-dasharray="1.5 1"/><rect x="1" y="4.6" width="9" height="2.6" fill="#807e7a"/><path d="M5.5 1.5 L5.5 4" stroke="#9a9894" stroke-width=".9"/></svg>
<svg class="b" style="left:761.0px;top:65.5px" width="11" height="12" viewBox="0 0 11 12"><path d="M2 1.5 L9 1.5 M2 10.5 L9 10.5" stroke="#aaa8a4" stroke-width=".9" stroke-dasharray="1.5 1"/><rect x="1" y="4.6" width="9" height="2.6" fill="#807e7a"/><path d="M5.5 1.5 L5.5 4" stroke="#9a9894" stroke-width=".9"/></svg>
<svg class="b" style="left:777.0px;top:65.5px" width="11" height="12" viewBox="0 0 11 12"><path d="M2 1.5 L9 1.5 M2 10.5 L9 10.5" stroke="#aaa8a4" stroke-width=".9" stroke-dasharray="1.5 1"/><rect x="1" y="4.6" width="9" height="2.6" fill="#807e7a"/><path d="M5.5 1.5 L5.5 4" stroke="#9a9894" stroke-width=".9"/></svg>
<svg class="b" style="left:794.0px;top:65.5px" width="11" height="12" viewBox="0 0 11 12"><path d="M2 1.5 L9 1.5 M2 10.5 L9 10.5" stroke="#aaa8a4" stroke-width=".9" stroke-dasharray="1.5 1"/><rect x="1" y="4.6" width="9" height="2.6" fill="#807e7a"/><path d="M5.5 1.5 L5.5 4" stroke="#9a9894" stroke-width=".9"/></svg>
<svg class="b" style="left:811.0px;top:65.5px" width="11" height="12" viewBox="0 0 11 12"><path d="M2 1.5 L9 1.5 M2 10.5 L9 10.5" stroke="#aaa8a4" stroke-width=".9" stroke-dasharray="1.5 1"/><rect x="1" y="4.6" width="9" height="2.6" fill="#807e7a"/><path d="M5.5 1.5 L5.5 4" stroke="#9a9894" stroke-width=".9"/></svg>
<div class="b " style="left:828.0px;top:66.0px;width:12.0px;height:11.5px;background:#7e7c78"></div>
<svg class="b" style="left:852.0px;top:65.5px" width="11" height="12" viewBox="0 0 11 12"><path d="M1 1.5 L10 1.5 M1 4 L10 4" stroke="#aaa8a4" stroke-width=".9"/><path d="M2 7 L4.5 10.5 L10 3.5" stroke="#939190" stroke-width="1.5" fill="none"/></svg>
<svg class="b" style="left:870.0px;top:65.5px" width="11" height="12" viewBox="0 0 11 12"><path d="M1 1.5 L8 1.5 M1 4 L8 4" stroke="#aaa8a4" stroke-width=".9"/><path d="M4 5 L9.5 6 L9.5 11.5 L5.5 11.5 Z" fill="#939190"/></svg>
<div class="b " style="left:0.0px;top:80.6px;width:132.0px;height:10.4px;background:#14287a"></div>
<span class="t" style="left:2.5px;top:81px;font-size:7.8px;line-height:9px;color:#fff;font-weight:bold;transform:scaleX(1.153);">Paleta de Herramientas</span>
<svg class="b" style="left:123.5px;top:82.8px" width="7" height="7" viewBox="0 0 7 7"><path d="M1 1 L6 6 M6 1 L1 6" stroke="#e4e8fc" stroke-width="1.3"/></svg>
<div class="b " style="left:132.4px;top:91.0px;width:2.2px;height:449.0px;background:#e8e7e3"></div>
<div class="b " style="left:134.6px;top:80.6px;width:0.9px;height:459.4px;background:#b4b2ac"></div>
<div class="b " style="left:0.0px;top:91.0px;width:1.0px;height:449.0px;background:#a8a6a0"></div>
<div class="b " style="left:135.6px;top:80.6px;width:10.4px;height:29.1px;background:#14287a"></div>
<svg class="b" style="left:137.5px;top:82.5px" width="7" height="7" viewBox="0 0 7 7"><path d="M1 1 L6 6 M6 1 L1 6" stroke="#e4e8fc" stroke-width="1.3"/></svg>
<svg class="b" style="left:136.8px;top:99.0px" width="8" height="9" viewBox="0 0 8 9"><path d="M2 2.6 A3 3 0 1 0 6.2 2.6" stroke="#d4dcfa" stroke-width="1.3" fill="none"/><path d="M.4 1.4 L3.4 1.2 L3.2 4 Z" fill="#d4dcfa"/></svg>
<div class="b " style="left:135.6px;top:111.5px;width:630.4px;height:0.8px;background:#a8a6a0"></div>
<div class="b " style="left:135.6px;top:112.3px;width:630.4px;height:0.9px;background:#efeeea"></div>
<div class="b " style="left:135.8px;top:113.2px;width:7.4px;height:413.8px;background:#fbfbfa;border-left:1px solid #8a8884;border-top:1px solid #8a8884"></div>
<div class="b " style="left:143.2px;top:113.5px;width:1.0px;height:426.5px;background:#b4b2ac"></div>
<div class="b raised" style="left:136.6px;top:527.0px;width:6.8px;height:13.0px;"></div>
<svg class="b" style="left:138.5px;top:529.0px" width="4" height="9" viewBox="0 0 4 9"><path d="M2 1 L2 8" stroke="#777" stroke-width="1" stroke-dasharray="1.2 1.2"/></svg>
<div class="b " style="left:146.4px;top:114.0px;width:150.6px;height:11.4px;background:#828282"></div>
<svg class="b" style="left:148.5px;top:115.2px" width="8" height="9.5" viewBox="0 0 8 9.5"><path d="M.5 .5 L5.5 .5 L7.5 2.5 L7.5 9 L.5 9 Z" fill="#fff" stroke="#111" stroke-width="1"/><rect x="1.8" y="4.4" width="4.4" height="3.6" fill="#111"/><rect x="3" y="5.4" width="1.6" height="1.4" fill="#fff"/></svg>
<span class="t" style="left:160.5px;top:114px;font-size:9.6px;line-height:11px;color:#d9d7d2;font-weight:bold;transform:scaleX(0.923);">ZIPPER_Play Mart_Mini</span>
<div class="b " style="left:153.6px;top:131.2px;width:97.7px;height:98.4px;background:#fff;border:1px solid;border-color:#7c7a76 #f6f6f4 #f6f6f4 #7c7a76"></div>
<svg class="b" style="left:154.5px;top:132.2px" width="96" height="96" viewBox="264 109 436 436"><use href="#pg"/></svg>
<div class="b raised" style="left:256.3px;top:138.4px;width:14.1px;height:14.2px;"></div>
<div class="b raised" style="left:256.3px;top:153.0px;width:14.1px;height:14.2px;"></div>
<div class="b raised" style="left:256.3px;top:167.5px;width:14.1px;height:14.2px;"></div>
<div class="b raised" style="left:256.3px;top:182.0px;width:14.1px;height:14.2px;"></div>
<div class="b raised" style="left:256.3px;top:196.3px;width:14.1px;height:14.2px;"></div>
<div class="b " style="left:256.0px;top:210.5px;width:14.6px;height:14.8px;background:#e8e7e3;border:1.4px solid;border-color:#4a4a48 #f8f8f6 #f8f8f6 #4a4a48"></div>
<svg class="b" style="left:259.0px;top:141.0px" width="9" height="9" viewBox="0 0 9 9"><path d="M1.5 1.5 L1.5 7.5 M3.8 1.5 L8 1.5 L4.5 7.5" stroke="#555" stroke-width="1.1" fill="none"/></svg>
<svg class="b" style="left:259.5px;top:156.0px" width="8" height="8" viewBox="0 0 8 8"><rect x="1" y="1" width="6" height="6" fill="none" stroke="#333" stroke-width="1.2"/><path d="M2.5 5.5 L5.5 2.5" stroke="#333" stroke-width="1"/></svg>
<svg class="b" style="left:258.5px;top:170.0px" width="10" height="10" viewBox="0 0 10 10"><rect x="2" y="1" width="6" height="5" fill="#fff" stroke="#222" stroke-width="1.1"/><path d="M.5 8 L9.5 8" stroke="#222" stroke-width="1.6"/></svg>
<svg class="b" style="left:258.5px;top:184.2px" width="10" height="10" viewBox="0 0 10 10"><path d="M5 .8 L9 3 L9 7.2 L5 9.4 L1 7.2 L1 3 Z M1 3 L5 5.2 L9 3 M5 5.2 L5 9.4" fill="#f4f4f4" stroke="#222" stroke-width="1"/></svg>
<svg class="b" style="left:258.5px;top:198.5px" width="10" height="10" viewBox="0 0 10 10"><path d="M5 .8 L9 3 L9 7.2 L5 9.4 L1 7.2 L1 3 Z" fill="#222" stroke="#111" stroke-width="1"/><path d="M1.2 3 L5 5.2 L5 9.2 L1.2 7 Z" fill="#eee"/></svg>
<svg class="b" style="left:258.5px;top:213.0px" width="10" height="10" viewBox="0 0 10 10"><rect x="2.6" y="2.4" width="4.8" height="5.2" fill="#c8c8c8" stroke="#222" stroke-width="1.1"/><path d="M1 1 L1 9 M9 1 L9 9 M1 2.5 L9 2.5 M1 7.5 L9 7.5" stroke="#222" stroke-width="1"/></svg>
<div class="b " style="left:152.3px;top:231.5px;width:119.5px;height:14.0px;background:#eae9e6;border:1px solid;border-color:#55534f #fafaf8 #fafaf8 #55534f;border-left-width:1.5px"></div>
<span class="t" style="left:198.2px;top:233px;font-size:8.3px;line-height:10px;color:#1c1c1c;transform:scaleX(0.937);">Detalles</span>
<div class="b raised" style="left:152.3px;top:246.5px;width:119.5px;height:14.2px;"></div>
<span class="t" style="left:192.5px;top:248px;font-size:8.3px;line-height:10px;color:#1c1c1c;transform:scaleX(0.925);">Parámetros</span>
<div class="b raised" style="left:152.3px;top:261.5px;width:119.5px;height:14.2px;"></div>
<span class="t" style="left:195.2px;top:263px;font-size:8.3px;line-height:10px;color:#1c1c1c;transform:scaleX(0.950);">Migración</span>
<div class="b raised" style="left:152.3px;top:276.5px;width:119.5px;height:14.2px;"></div>
<span class="t" style="left:188.0px;top:278px;font-size:8.3px;line-height:10px;color:#1c1c1c;transform:scaleX(0.940);">Componentes</span>
<div class="b raised" style="left:152.3px;top:291.5px;width:119.5px;height:14.2px;"></div>
<span class="t" style="left:191.2px;top:293px;font-size:8.3px;line-height:10px;color:#1c1c1c;transform:scaleX(0.904);">Descriptores</span>
<div class="b " style="left:149.9px;top:312.0px;width:124.5px;height:128.0px;border:1px solid #a3a19b;box-shadow:1px 1px 0 #f2f2f0, inset 1px 1px 0 #f2f2f0"></div>
<div class="b " style="left:154.5px;top:308.0px;width:27.0px;height:8.0px;background:#d2d0cb"></div>
<span class="t" style="left:156.4px;top:307px;font-size:8.4px;line-height:10px;color:#333;transform:scaleX(0.896);">Scripts</span>
<div class="b raised" style="left:152.3px;top:319.5px;width:99.1px;height:14.2px;"></div>
<div class="b raised" style="left:252.0px;top:319.5px;width:19.8px;height:14.2px;"></div>
<div class="b " style="left:256.0px;top:321.5px;width:13.0px;height:9.8px;background:#fff;border:1.2px solid #111;border-top:3.2px solid #161616"></div>
<span class="t" style="left:188.3px;top:321px;font-size:8.3px;line-height:10px;color:#1c1c1c;transform:scaleX(0.927);">Maestro</span>
<div class="b raised" style="left:152.3px;top:334.5px;width:99.1px;height:14.2px;"></div>
<div class="b raised" style="left:252.0px;top:334.5px;width:19.8px;height:14.2px;"></div>
<div class="b " style="left:256.0px;top:336.5px;width:13.0px;height:9.8px;background:#fff;border:1.2px solid #111;border-top:3.2px solid #161616"></div>
<span class="t" style="left:197.0px;top:336px;font-size:8.3px;line-height:10px;color:#1c1c1c;transform:scaleX(0.980);">2D</span>
<div class="b raised" style="left:152.3px;top:349.5px;width:99.1px;height:14.2px;"></div>
<div class="b raised" style="left:252.0px;top:349.5px;width:19.8px;height:14.2px;"></div>
<div class="b " style="left:256.0px;top:351.5px;width:13.0px;height:9.8px;background:#fff;border:1.2px solid #111;border-top:3.2px solid #161616"></div>
<span class="t" style="left:197.0px;top:351px;font-size:8.3px;line-height:10px;color:#1c1c1c;transform:scaleX(0.980);">3D</span>
<div class="b raised" style="left:152.3px;top:364.5px;width:99.1px;height:14.2px;"></div>
<div class="b raised" style="left:252.0px;top:364.5px;width:19.8px;height:14.2px;"></div>
<div class="b " style="left:256.0px;top:366.5px;width:13.0px;height:9.8px;background:#fff;border:1.2px solid #111;border-top:3.2px solid #161616"></div>
<span class="t" style="left:180.0px;top:366px;font-size:8.3px;line-height:10px;color:#1c1c1c;transform:scaleX(0.950);">Propiedades</span>
<div class="b raised" style="left:152.3px;top:379.5px;width:99.1px;height:14.2px;"></div>
<div class="b raised" style="left:252.0px;top:379.5px;width:19.8px;height:14.2px;"></div>
<div class="b " style="left:256.0px;top:381.5px;width:13.0px;height:9.8px;background:#fff;border:1.2px solid #111;border-top:3.2px solid #161616"></div>
<span class="t" style="left:183.9px;top:381px;font-size:8.3px;line-height:10px;color:#1c1c1c;transform:scaleX(0.942);">Parámetro</span>
<div class="b raised" style="left:152.3px;top:394.5px;width:99.1px;height:14.2px;"></div>
<div class="b raised" style="left:252.0px;top:394.5px;width:19.8px;height:14.2px;"></div>
<div class="b " style="left:256.0px;top:396.5px;width:13.0px;height:9.8px;background:#fff;border:1.2px solid #111;border-top:3.2px solid #161616"></div>
<span class="t" style="left:187.2px;top:396px;font-size:8.3px;line-height:10px;color:#1c1c1c;transform:scaleX(0.926);">Interface</span>
<div class="b raised" style="left:152.3px;top:409.5px;width:99.1px;height:14.2px;"></div>
<div class="b raised" style="left:252.0px;top:409.5px;width:19.8px;height:14.2px;"></div>
<div class="b " style="left:256.0px;top:411.5px;width:13.0px;height:9.8px;background:#fff;border:1.2px solid #111;border-top:3.2px solid #161616"></div>
<span class="t" style="left:163.9px;top:411px;font-size:8.3px;line-height:10px;color:#1c1c1c;transform:scaleX(0.953);">Migración a Posteriori</span>
<div class="b raised" style="left:152.3px;top:424.5px;width:99.1px;height:14.2px;"></div>
<div class="b raised" style="left:252.0px;top:424.5px;width:19.8px;height:14.2px;"></div>
<div class="b " style="left:256.0px;top:426.5px;width:13.0px;height:9.8px;background:#fff;border:1.2px solid #111;border-top:3.2px solid #161616"></div>
<span class="t" style="left:170.9px;top:426px;font-size:8.3px;line-height:10px;color:#1c1c1c;transform:scaleX(0.968);">Migración a Priori</span>
<span class="t" style="left:181.4px;top:446px;font-size:8.3px;line-height:10px;color:#1c1c1c;transform:scaleX(0.955);">Símbolo 2D</span>
<div class="b raised" style="left:252.0px;top:444.2px;width:19.8px;height:14.2px;"></div>
<div class="b " style="left:256.0px;top:446.2px;width:13.0px;height:9.8px;background:#fff;border:1.2px solid #111;border-top:3.2px solid #161616"></div>
<span class="t" style="left:176.8px;top:461px;font-size:8.3px;line-height:10px;color:#1c1c1c;transform:scaleX(0.960);">Imagen previa</span>
<div class="b raised" style="left:252.0px;top:459.2px;width:19.8px;height:14.2px;"></div>
<div class="b " style="left:256.0px;top:461.2px;width:13.0px;height:9.8px;background:#fff;border:1.2px solid #111;border-top:3.2px solid #161616"></div>
<div class="b " style="left:152.0px;top:476.0px;width:119.5px;height:1.0px;background:#a3a19b"></div>
<div class="b " style="left:152.0px;top:477.0px;width:119.5px;height:1.0px;background:#f2f2f0"></div>
<span class="t" style="left:187.8px;top:480px;font-size:8.3px;line-height:10px;color:#1c1c1c;transform:scaleX(0.935);">Vista 2D</span>
<div class="b raised" style="left:252.0px;top:478.6px;width:19.8px;height:14.2px;"></div>
<div class="b " style="left:256.0px;top:480.6px;width:13.0px;height:9.8px;background:#fff;border:1.2px solid #111;border-top:3.2px solid #161616"></div>
<span class="t" style="left:187.8px;top:495px;font-size:8.3px;line-height:10px;color:#1c1c1c;transform:scaleX(0.935);">Vista 3D</span>
<div class="b raised" style="left:252.0px;top:493.6px;width:19.8px;height:14.2px;"></div>
<div class="b " style="left:256.0px;top:495.6px;width:13.0px;height:9.8px;background:#fff;border:1.2px solid #111;border-top:3.2px solid #161616"></div>
<span class="t" style="left:287.3px;top:140px;font-size:8.4px;line-height:10px;color:#333;transform:scaleX(0.720);">Su</span>
<span class="t" style="left:287.3px;top:195px;font-size:8.4px;line-height:10px;color:#333;transform:scaleX(0.740);">Au</span>
<span class="t" style="left:287.3px;top:218px;font-size:8.4px;line-height:10px;color:#333;transform:scaleX(0.875);">Lic</span>
<span class="t" style="left:287.3px;top:240px;font-size:8.4px;line-height:10px;color:#333;transform:scaleX(0.782);">Co</span>
<span class="t" style="left:287.3px;top:262px;font-size:8.4px;line-height:10px;color:#333;transform:scaleX(0.764);">De</span>
<span class="t" style="left:287.3px;top:337px;font-size:8.4px;line-height:10px;color:#333;transform:scaleX(0.759);">Pa</span>
<div class="b " style="left:287.0px;top:189.5px;width:10.0px;height:0.9px;background:#a3a19b"></div>
<div class="b " style="left:287.0px;top:190.4px;width:10.0px;height:0.8px;background:#f2f2f0"></div>
<div class="b " style="left:287.0px;top:412.0px;width:10.0px;height:0.9px;background:#aeaca6"></div>
<svg width="0" height="0" style="position:absolute"><defs>
<linearGradient id="rampg" gradientUnits="userSpaceOnUse" x1="500" y1="350" x2="600" y2="445"><stop offset="0" stop-color="#773e35"/><stop offset="1" stop-color="#855248"/></linearGradient>
<g id="pg">
 <!-- posts lower -->
 <rect x="417" y="340" width="9.5" height="63" fill="#5f4e44"/>
 <rect x="378" y="410" width="10.5" height="27" fill="#4f3a30"/>
 <!-- roof gable -->
 <path d="M503 197 L531.5 217 L531.5 223.5 L527 223 L526 221 C506 219 486 232 479 252 L474 244 Z" fill="#5f4e44"/>
 <path d="M503 197 L531.5 217 L531.5 219.5 L502 200 Z" fill="#2c2a22"/>
 <!-- roof -->
 <path d="M440 167.5 L411 221 L477 246 L503.5 197 Z" fill="#17452b"/>
 <path d="M411 221 L477 246 L477 248.5 L411 224 Z" fill="#3c2c24"/>
 <!-- posts upper -->
 <rect x="415.3" y="224" width="11" height="40" fill="#5f4e44"/>
 <rect x="511" y="221" width="15.4" height="40" fill="#5f4e44"/>
 <!-- sign -->
 <rect x="501.4" y="245.3" width="29" height="8.3" fill="#8a4038"/>
 <rect x="506" y="246.3" width="12" height="6.3" fill="#2a5a3a"/>
 <!-- right green curve -->
 <path d="M482 284 C487 270 502 267 512 271 L512 304 C501 297 491 298 485 308 Z" fill="#17452b"/>
 <!-- right post lower -->
 <rect x="511" y="259" width="15.4" height="91" fill="#7b4238"/>
 <path d="M527 288.5 L532 288.5 L533 319 L527 319" stroke="#123a22" stroke-width="3.4" fill="none" stroke-linejoin="round"/>
 <!-- green wall -->
 <path d="M427.5 277 L465 262 L465 342 L427.5 347 Z" fill="#17452b"/>
 <path d="M427.5 277 L465 262 L465 265 L427.5 280 Z" fill="#6b4a3c"/>
 <ellipse cx="452.5" cy="272.3" rx="9.8" ry="11.6" fill="#7d8b7b" stroke="#1f2c22" stroke-width="3.6" transform="rotate(18 452.5 272.3)"/><path d="M447.5 265 L456.5 280 M451.5 263 L459.5 276" stroke="#4c5a4c" stroke-width="1.6"/>
 <!-- platform side -->
 <path d="M427.5 336 L466 332 L466 356 L441 362 L427.5 350 Z" fill="#4a2e26"/>
 <!-- deck -->
 <path d="M479 333 L511 331 L527 346 L479.5 352 Z" fill="#9c8064"/>
 <path d="M488 338 L496 336 L504 348 L497 350 Z" fill="#5a4034"/>
 <!-- left red-brown panel -->
 <rect x="412.5" y="262" width="15.3" height="85" fill="#7b4238"/>
 <!-- ramp side + surface -->
 <path d="M479.5 350 L526 345 L630 428.5 L581 456 L479.5 384 Z" fill="url(#rampg)"/>
 <path d="M441 358 L469 350 L469 383.5 L441 369 Z" fill="#7b4238"/>
 <path d="M480 383 L581 456" stroke="#5e4238" stroke-width="2.2"/>
 <path d="M499 352 L556 424 M520 360 L580 436" stroke="#69302a" stroke-width="1.6" opacity=".8"/>
 <path d="M574.6 455 L586.7 452.8 L611 475.3 L605.8 479 Z" fill="#6b5a50"/>
 <path d="M621.5 433.7 L631.9 430.2 L658 451 L652.7 454.5 Z" fill="#6b5a50"/>
 <g fill="#1e6a38">
  <circle cx="520.8" cy="364.5" r="3.6"/><circle cx="512" cy="381.6" r="3.6"/><circle cx="546.8" cy="378.1" r="3.8"/>
  <circle cx="555.5" cy="407" r="3.6"/><circle cx="586.7" cy="407.6" r="3.8"/><circle cx="574.6" cy="421.5" r="3.6"/>
 </g>
 <circle cx="584.5" cy="437" r="4.6" fill="#a67870" opacity=".6"/><circle cx="541.8" cy="366.5" r="3.6" fill="#a67870" opacity=".5"/>
 <!-- center barrier and post -->
 <path d="M451 291 C451 284 458 282 464 285 L480 283 C484 279 489.5 281 489.5 288 L489.5 341 L451 343 Z" fill="#7b4238"/>
 <rect x="464" y="244" width="15" height="48" fill="#5f4e44"/>
 <rect x="464.5" y="290" width="14.8" height="80" fill="#70362d"/>
 <rect x="468.7" y="368" width="11.3" height="56" fill="#5f4e44"/>
 <!-- slide -->
 <path d="M417 332.5 C408 336 401 341 395 347 C385 357 364 378 351 391 C343 399 337 404 334 408 C333 416 340 426 348 431 C353 435 362 437 368 434.5 C378 429 388 422 395 415.5 C402 408 408 401 414 393.5 C420 386 426 378.5 432 373 C440 366 449 360 458 357 C450 359.5 444 360 439 359 C433 355 428 349 426 346 Z" fill="#0d3720"/>
 <path d="M400 352 C385 365 362 388 348 404 C352 412 360 418 368 420 C385 405 405 380 420 362 Z" fill="#15442a" opacity=".85"/>
 <path d="M413 391.5 L427.5 371 L430 372.5 L416 392 Z" fill="#8cc4a6"/>
 <path d="M356 433.5 L372 428.5 L369 433 L360 436 Z" fill="#a4ccb4"/>
 <circle cx="366" cy="403" r="4" fill="#4a7a5e" opacity=".7"/>
 <g fill="#dfe9e0" opacity=".85"><circle cx="434.4" cy="215.3" r="0.80"/><circle cx="350.7" cy="416.4" r="0.55"/><circle cx="447.2" cy="187.4" r="0.80"/><circle cx="401.3" cy="195.8" r="0.65"/><circle cx="357.2" cy="197.2" r="0.65"/><circle cx="354.0" cy="339.6" r="0.55"/><circle cx="527.7" cy="344.9" r="0.55"/><circle cx="511.4" cy="289.0" r="0.55"/><circle cx="350.2" cy="427.5" r="0.65"/><circle cx="463.4" cy="332.2" r="0.80"/><circle cx="429.8" cy="414.8" r="0.55"/><circle cx="367.3" cy="341.4" r="0.55"/><circle cx="449.2" cy="334.3" r="0.55"/><circle cx="507.6" cy="355.7" r="0.65"/><circle cx="542.8" cy="298.3" r="0.65"/><circle cx="477.5" cy="447.0" r="0.65"/><circle cx="427.1" cy="408.3" r="0.80"/><circle cx="573.1" cy="194.6" r="0.65"/><circle cx="495.7" cy="432.5" r="0.80"/><circle cx="472.4" cy="352.7" r="0.55"/><circle cx="371.9" cy="295.4" r="0.65"/><circle cx="382.2" cy="316.7" r="0.55"/><circle cx="628.5" cy="193.3" r="0.80"/><circle cx="510.2" cy="432.6" r="0.65"/><circle cx="439.4" cy="275.1" r="0.65"/><circle cx="512.3" cy="306.9" r="0.55"/><circle cx="623.2" cy="312.2" r="0.80"/><circle cx="355.8" cy="389.3" r="0.65"/><circle cx="532.7" cy="467.9" r="0.65"/><circle cx="422.5" cy="285.7" r="0.80"/><circle cx="441.5" cy="452.2" r="0.65"/><circle cx="387.1" cy="205.1" r="0.55"/><circle cx="402.3" cy="256.2" r="0.80"/><circle cx="411.3" cy="287.3" r="0.65"/><circle cx="360.5" cy="304.8" r="0.80"/><circle cx="420.5" cy="211.1" r="0.65"/><circle cx="598.7" cy="253.5" r="0.65"/><circle cx="635.9" cy="374.8" r="0.65"/><circle cx="627.2" cy="215.3" r="0.55"/><circle cx="382.0" cy="367.6" r="0.55"/><circle cx="483.4" cy="346.7" r="0.65"/><circle cx="421.7" cy="213.7" r="0.80"/><circle cx="448.3" cy="339.9" r="0.55"/><circle cx="545.9" cy="324.6" r="0.80"/><circle cx="535.1" cy="391.9" r="0.65"/><circle cx="609.5" cy="404.0" r="0.80"/><circle cx="578.6" cy="287.7" r="0.65"/><circle cx="455.8" cy="314.5" r="0.65"/><circle cx="354.9" cy="190.2" r="0.55"/><circle cx="470.0" cy="203.0" r="0.80"/><circle cx="352.0" cy="170.1" r="0.55"/><circle cx="499.1" cy="454.7" r="0.80"/><circle cx="343.8" cy="432.3" r="0.80"/><circle cx="450.4" cy="360.3" r="0.65"/><circle cx="519.1" cy="312.2" r="0.55"/><circle cx="594.1" cy="467.9" r="0.65"/><circle cx="482.0" cy="263.6" r="0.55"/><circle cx="367.1" cy="272.8" r="0.65"/><circle cx="481.5" cy="377.6" r="0.80"/><circle cx="343.0" cy="455.3" r="0.80"/><circle cx="446.0" cy="377.0" r="0.55"/><circle cx="566.5" cy="259.4" r="0.80"/><circle cx="598.5" cy="378.9" r="0.65"/><circle cx="493.6" cy="442.5" r="0.65"/><circle cx="570.7" cy="329.8" r="0.80"/><circle cx="436.2" cy="236.9" r="0.55"/><circle cx="581.0" cy="415.5" r="0.80"/><circle cx="580.2" cy="230.0" r="0.65"/><circle cx="444.1" cy="178.7" r="0.55"/><circle cx="576.2" cy="311.7" r="0.55"/><circle cx="546.5" cy="457.0" r="0.65"/><circle cx="581.8" cy="386.9" r="0.65"/><circle cx="626.3" cy="279.4" r="0.55"/><circle cx="367.1" cy="311.0" r="0.65"/><circle cx="398.1" cy="357.2" r="0.80"/><circle cx="591.5" cy="313.8" r="0.80"/><circle cx="440.6" cy="362.9" r="0.80"/><circle cx="372.5" cy="286.6" r="0.80"/><circle cx="564.0" cy="313.4" r="0.55"/><circle cx="467.9" cy="360.8" r="0.55"/><circle cx="579.5" cy="461.5" r="0.65"/><circle cx="476.8" cy="393.0" r="0.55"/><circle cx="556.3" cy="221.0" r="0.55"/><circle cx="344.4" cy="347.2" r="0.65"/><circle cx="581.2" cy="213.9" r="0.80"/><circle cx="634.0" cy="367.2" r="0.65"/><circle cx="383.4" cy="334.5" r="0.55"/><circle cx="340.3" cy="461.3" r="0.80"/><circle cx="367.2" cy="394.8" r="0.55"/><circle cx="467.9" cy="431.5" r="0.55"/><circle cx="344.5" cy="233.8" r="0.80"/><circle cx="409.1" cy="345.9" r="0.65"/><circle cx="501.5" cy="420.3" r="0.55"/><circle cx="612.6" cy="276.1" r="0.65"/><circle cx="537.4" cy="414.5" r="0.80"/><circle cx="463.9" cy="445.3" r="0.80"/><circle cx="375.8" cy="215.6" r="0.80"/><circle cx="341.7" cy="302.0" r="0.55"/><circle cx="521.0" cy="402.8" r="0.55"/><circle cx="388.4" cy="312.0" r="0.80"/><circle cx="372.6" cy="188.5" r="0.80"/><circle cx="493.6" cy="336.6" r="0.55"/><circle cx="604.5" cy="187.0" r="0.55"/><circle cx="420.2" cy="401.7" r="0.80"/><circle cx="473.5" cy="178.4" r="0.55"/><circle cx="470.7" cy="353.8" r="0.80"/><circle cx="520.3" cy="229.8" r="0.65"/><circle cx="473.5" cy="330.0" r="0.65"/><circle cx="490.4" cy="244.3" r="0.80"/><circle cx="602.5" cy="452.7" r="0.65"/><circle cx="616.5" cy="437.8" r="0.55"/><circle cx="591.4" cy="211.1" r="0.55"/><circle cx="455.3" cy="264.8" r="0.80"/><circle cx="409.2" cy="191.9" r="0.80"/><circle cx="428.0" cy="206.7" r="0.55"/><circle cx="621.6" cy="363.0" r="0.65"/><circle cx="379.5" cy="434.8" r="0.65"/><circle cx="402.8" cy="455.8" r="0.65"/><circle cx="605.0" cy="218.8" r="0.80"/><circle cx="589.1" cy="218.4" r="0.65"/><circle cx="638.2" cy="291.1" r="0.65"/><circle cx="395.5" cy="265.6" r="0.80"/><circle cx="447.2" cy="271.4" r="0.65"/><circle cx="469.9" cy="175.4" r="0.65"/><circle cx="493.3" cy="258.6" r="0.55"/><circle cx="370.3" cy="445.6" r="0.55"/><circle cx="631.4" cy="201.4" r="0.65"/><circle cx="418.7" cy="441.8" r="0.55"/><circle cx="418.2" cy="208.9" r="0.65"/><circle cx="594.3" cy="372.8" r="0.65"/><circle cx="459.4" cy="331.0" r="0.80"/><circle cx="509.5" cy="380.1" r="0.55"/><circle cx="420.8" cy="409.9" r="0.55"/><circle cx="465.3" cy="191.7" r="0.55"/><circle cx="528.9" cy="410.5" r="0.55"/><circle cx="520.9" cy="236.7" r="0.65"/><circle cx="598.3" cy="306.1" r="0.65"/><circle cx="638.3" cy="295.3" r="0.65"/><circle cx="525.0" cy="183.0" r="0.80"/><circle cx="408.5" cy="202.8" r="0.55"/><circle cx="415.6" cy="224.3" r="0.65"/><circle cx="527.1" cy="329.3" r="0.55"/><circle cx="424.1" cy="320.0" r="0.55"/><circle cx="418.2" cy="411.1" r="0.65"/><circle cx="347.2" cy="175.5" r="0.80"/><circle cx="503.5" cy="226.8" r="0.65"/><circle cx="410.7" cy="304.1" r="0.80"/><circle cx="585.0" cy="299.7" r="0.65"/><circle cx="502.0" cy="436.6" r="0.80"/><circle cx="429.6" cy="234.6" r="0.55"/></g>
</g></defs></svg>
<div class="b " style="left:296.6px;top:115.6px;width:468.6px;height:393.4px;background:#d2d0cb;border:1px solid;border-color:#e6e5e1 #55534f #55534f #e6e5e1"></div>
<div class="b " style="left:297.6px;top:116.6px;width:466.6px;height:391.4px;border:1px solid;border-color:#fbfbf9 #8c8a86 #8c8a86 #fbfbf9"></div>
<div class="b " style="left:299.6px;top:117.8px;width:463.4px;height:13.2px;background:linear-gradient(90deg,#19226a 0%,#1c2e78 10%,#a6c8ee 100%)"></div>
<svg class="b" style="left:302.0px;top:119.3px" width="9" height="10" viewBox="0 0 9 10"><path d="M.6 .6 L6 .6 L8.4 3 L8.4 9.4 L.6 9.4 Z" fill="#fff" stroke="#111" stroke-width="1.1"/><rect x="2" y="4.6" width="5" height="3.8" fill="#111"/><rect x="3.4" y="5.6" width="2" height="1.6" fill="#fff"/></svg>
<span class="t" style="left:314.2px;top:120px;font-size:9px;line-height:10px;color:#fff;font-weight:bold;transform:scaleX(1.015);">ZIPPER_Play Mart_Mini / Imagen # 1</span>
<div class="b raised" style="left:723.0px;top:119.6px;width:12.0px;height:10.0px;"></div>
<div class="b " style="left:726.0px;top:125.8px;width:4.5px;height:1.2px;background:#000"></div>
<div class="b raised" style="left:735.0px;top:119.6px;width:12.0px;height:10.0px;"></div>
<div class="b " style="left:737.5px;top:121.6px;width:6.5px;height:5.5px;border:.8px solid #000;border-top-width:1.6px"></div>
<div class="b raised" style="left:749.0px;top:119.6px;width:12.0px;height:10.0px;"></div>
<svg class="b" style="left:749.0px;top:119.6px" width="12" height="10" viewBox="0 0 12 10"><path d="M2.8 2.0 L8.8 7.6 M8.8 2.0 L2.8 7.6" stroke="#000" stroke-width="1.2" fill="none"/></svg>
<div class="b " style="left:299.6px;top:131.0px;width:450.2px;height:362.6px;background:#f0f0f0"></div>
<svg class="b" style="left:299.6px;top:131px" width="450" height="362" viewBox="299.6 131 450 362"><use href="#pg"/><path d="M308 140 L714 140 L714 491 L308 491 Z" fill="none" stroke="#5a5a5a" stroke-width="1.1" stroke-dasharray="4 3.55"/><path d="M710 491 L718 491 M714 487 L714 495.5" stroke="#444" stroke-width="1.2"/></svg>
<div class="b " style="left:749.8px;top:131.0px;width:13.2px;height:362.6px;background:#ededeb"></div>
<div class="b raised" style="left:750.4px;top:133.0px;width:11.6px;height:11.0px;"></div>
<svg class="b" style="left:753.7px;top:137px" width="5" height="3"><path d="M0 3 L5 3 L2.5 0 Z" fill="#111"/></svg>
<div class="b raised" style="left:750.2px;top:144.5px;width:11.8px;height:297.9px;"></div>
<div class="b raised" style="left:750.4px;top:482.4px;width:11.6px;height:11.0px;"></div>
<svg class="b" style="left:754.0px;top:486.6px" width="4.5" height="2.7" viewBox="0 0 4.5 2.7"><path d="M0 0 L4.5 0 L2.25 2.7 Z" fill="#111"/></svg>
<div class="b " style="left:299.6px;top:493.6px;width:463.4px;height:13.4px;background:#ecebe8"></div>
<div class="b " style="left:299.6px;top:494.2px;width:41.4px;height:11.8px;background:#d2d0cb;border:1px solid;border-color:#8c8a86 #f6f6f4 #f6f6f4 #8c8a86"></div>
<span class="t" style="left:304.0px;top:495px;font-size:8.6px;line-height:10px;color:#222;font-weight:bold;transform:scaleX(0.944);">549x478</span>
<div class="b raised" style="left:341.0px;top:494.2px;width:11.4px;height:12.0px;"></div>
<svg class="b" style="left:344.5px;top:497.2px" width="4" height="6" viewBox="0 0 4 6"><path d="M3.5 0 L3.5 6 L.5 3 Z" fill="#8a8884"/></svg>
<div class="b raised" style="left:737.6px;top:494.8px;width:10.8px;height:11.4px;"></div>
<svg class="b" style="left:741.5px;top:497.5px" width="4" height="6" viewBox="0 0 4 6"><path d="M.5 0 L.5 6 L3.5 3 Z" fill="#8a8884"/></svg>
<div class="b " style="left:749.4px;top:494.2px;width:14.2px;height:13.2px;background:#d2d0cb"></div>
<svg class="b" style="left:750.0px;top:495.0px" width="13" height="12" viewBox="0 0 13 12"><path d="M12 2 L2 12 M12 5.5 L5.5 12 M12 9 L9 12" stroke="#8c8a86" stroke-width="1"/><path d="M12 3.2 L3.2 12 M12 6.7 L6.7 12" stroke="#fff" stroke-width=".8"/></svg>
<div class="b " style="left:745.0px;top:509.0px;width:7.0px;height:18.5px;background:#f6f6f4"></div>
<div class="b raised" style="left:752.0px;top:515.0px;width:12.5px;height:12.5px;"></div>
<svg class="b" style="left:756.1px;top:519.9px" width="4.5" height="2.7" viewBox="0 0 4.5 2.7"><path d="M0 0 L4.5 0 L2.25 2.7 Z" fill="#111"/></svg>
<div class="b raised" style="left:745.0px;top:527.5px;width:7.0px;height:12.5px;"></div>
<svg class="b" style="left:746.5px;top:530.5px" width="4" height="6" viewBox="0 0 4 6"><path d="M.5 0 L.5 6 L3.5 3 Z" fill="#8a8884"/></svg>
<svg class="b" style="left:752.0px;top:528.0px" width="13" height="12" viewBox="0 0 13 12"><path d="M12 2 L2 12 M12 5.5 L5.5 12 M12 9 L9 12" stroke="#8c8a86" stroke-width="1"/><path d="M12 3.2 L3.2 12 M12 6.7 L6.7 12" stroke="#fff" stroke-width=".8"/></svg>
<div class="b " style="left:744.0px;top:509.0px;width:1.0px;height:31.0px;background:#8c8a86"></div>
<div class="b " style="left:765.2px;top:80.6px;width:1.2px;height:459.4px;background:#a09e98"></div>
<div class="b " style="left:766.4px;top:80.6px;width:2.6px;height:459.4px;background:#ecebe7"></div>
<div class="b " style="left:769.0px;top:80.4px;width:255.0px;height:10.4px;background:#14287a"></div>
<span class="t" style="left:771.5px;top:82px;font-size:7.8px;line-height:9px;color:#fff;font-weight:bold;transform:scaleX(1.149);">Navegador - Mapa del Proyecto</span>
<svg class="b" style="left:1015.5px;top:82.3px" width="7" height="7" viewBox="0 0 7 7"><path d="M1 1 L6 6 M6 1 L1 6" stroke="#fff" stroke-width="1.4"/></svg>
<div class="b raised" style="left:770.5px;top:94.0px;width:22.0px;height:17.4px;"></div>
<svg class="b" style="left:772.5px;top:96.5px" width="14" height="13" viewBox="0 0 14 13"><path d="M.8 .8 L6.5 .8 L9.5 3.8 L9.5 11 L.8 11 Z" fill="#fff" stroke="#3a3a8a" stroke-width="1.1"/><path d="M5 5.2 L9 5.2 L9 3.6 L12.6 6.8 L9 10 L9 8.4 L5 8.4 Z" fill="#eef" stroke="#3a3a8a" stroke-width=".9"/></svg>
<svg class="b" style="left:787.6px;top:104.6px" width="4" height="5" viewBox="0 0 4 5"><path d="M.5 0 L.5 5 L3.4 2.5 Z" fill="#111"/></svg>
<div class="b " style="left:931.6px;top:93.4px;width:23.4px;height:18.2px;background:#e6e5e1;border:1px solid;border-color:#6a6864 #fafaf8 #fafaf8 #6a6864"></div>
<div class="b raised" style="left:955.4px;top:93.8px;width:22.6px;height:17.6px;"></div>
<div class="b raised" style="left:978.2px;top:93.8px;width:22.6px;height:17.6px;"></div>
<div class="b raised" style="left:1001.0px;top:93.8px;width:22.6px;height:17.6px;"></div>
<svg class="b" style="left:937.0px;top:97.2px" width="12.0" height="11.0" viewBox="0 0 12 11"><path d="M1 5.2 L4 1.6 L7 5.2 L7 10.2 L1 10.2 Z" fill="#e39a52" stroke="#2a1a0a" stroke-width=".9"/><path d="M7 5.2 L11.3 4.2 L11.3 9 L7 10.2 Z" fill="#d98840" stroke="#2a1a0a" stroke-width=".9"/><path d="M4 1.6 L8.6 .8 L11.6 4.2 L7 5.2 Z" fill="#b86a2a" stroke="#2a1a0a" stroke-width=".9"/><path d="M.4 5.6 L4 1.2" stroke="#2a1a0a" stroke-width="1.1"/></svg>
<svg class="b" style="left:960.0px;top:97.6px" width="13" height="10" viewBox="0 0 13 10"><path d="M.7 .8 L5 .8 L5 3.6 L12 3.6 L12 9.3 L.7 9.3 Z" fill="#d8dc78" stroke="#5a4a30" stroke-width="1.1"/><rect x="7.2" y="5.6" width="4.8" height="3.7" fill="#e0a0a0" opacity=".8"/></svg>
<svg class="b" style="left:983.5px;top:97.6px" width="12" height="10" viewBox="0 0 12 10"><rect x=".7" y=".7" width="10.6" height="8.6" fill="#fff" stroke="#222" stroke-width="1.3"/><rect x="6.2" y="4.6" width="4.6" height="4.2" fill="#555"/><rect x="7.2" y="3.2" width="3.6" height="2" fill="#c8c070"/></svg>
<svg class="b" style="left:1006.0px;top:97.0px" width="12" height="12" viewBox="0 0 12 12"><path d="M.8 .8 L5.6 .8 L7.4 2.6 L7.4 7.6 L.8 7.6 Z" fill="#f0f0ff" stroke="#4038a8" stroke-width="1"/><path d="M3.6 3.6 L8.4 3.6 L10.6 5.8 L10.6 11 L3.6 11 Z" fill="#7468d0" stroke="#30288a" stroke-width="1"/></svg>
<div class="b " style="left:769.6px;top:114.0px;width:254.4px;height:345.0px;background:#fff;border-top:1.2px solid #6a6864;border-left:1.4px solid #6a6864"></div>
<span class="t" style="left:802.2px;top:116px;font-size:9px;line-height:10px;color:#1a1a1a;transform:scaleX(0.845);">Sin Título</span>
<svg class="b" style="left:787.3px;top:115.0px" width="12.0" height="11.0" viewBox="0 0 12 11"><path d="M1 5.2 L4 1.6 L7 5.2 L7 10.2 L1 10.2 Z" fill="#e39a52" stroke="#2a1a0a" stroke-width=".9"/><path d="M7 5.2 L11.3 4.2 L11.3 9 L7 10.2 Z" fill="#d98840" stroke="#2a1a0a" stroke-width=".9"/><path d="M4 1.6 L8.6 .8 L11.6 4.2 L7 5.2 Z" fill="#b86a2a" stroke="#2a1a0a" stroke-width=".9"/><path d="M.4 5.6 L4 1.2" stroke="#2a1a0a" stroke-width="1.1"/></svg>
<svg class="b" style="left:775.2px;top:116.6px" width="8" height="8" viewBox="0 0 8 8"><rect x=".9" y=".9" width="6.2" height="6.2" fill="#fff" stroke="#9496a6" stroke-width="1"/><path d="M2.2 4 L5.8 4" stroke="#222" stroke-width="1"/></svg>
<span class="t" style="left:816.5px;top:128px;font-size:9px;line-height:10px;color:#1a1a1a;transform:scaleX(0.804);">Pisos</span>
<svg class="b" style="left:802.0px;top:127.7px" width="12" height="10" viewBox="0 0 12 10"><rect x=".8" y=".8" width="10.4" height="8.4" fill="#eeeef6" stroke="#34347e" stroke-width="1.15"/><rect x=".8" y=".6" width="10.4" height="1.5" fill="#34347e"/><path d="M3.2 3.6 L5.8 3.6 L5.8 5.2 L8.6 5.2 L8.6 7.6 L3.2 7.6 Z" fill="none" stroke="#222" stroke-width=".9"/></svg>
<svg class="b" style="left:789.8px;top:128.6px" width="8" height="8" viewBox="0 0 8 8"><rect x=".9" y=".9" width="6.2" height="6.2" fill="#fff" stroke="#9496a6" stroke-width="1"/><path d="M2.2 4 L5.8 4" stroke="#222" stroke-width="1"/></svg>
<span class="t" style="left:830.8px;top:140px;font-size:9px;line-height:10px;color:#1a1a1a;transform:scaleX(0.850);">2. Piso</span>
<svg class="b" style="left:816.6px;top:139.9px" width="12" height="9" viewBox="0 0 12 9"><path d="M.7 .8 L5.2 .8 L5.2 3.4 L11.2 3.4 L11.2 8.3 L.7 8.3 Z" fill="#e0a060" stroke="#5a3010" stroke-width="1.1"/></svg>
<span class="t" style="left:830.8px;top:152px;font-size:9px;line-height:10px;color:#1a1a1a;transform:scaleX(0.850);">1. Piso</span>
<svg class="b" style="left:816.6px;top:151.9px" width="12" height="9" viewBox="0 0 12 9"><path d="M.7 .8 L5.2 .8 L5.2 3.4 L11.2 3.4 L11.2 8.3 L.7 8.3 Z" fill="#e0a060" stroke="#5a3010" stroke-width="1.1"/></svg>
<div class="b " style="left:829.6px;top:163.2px;width:52.3px;height:10.6px;border:1px solid #6a6a6a"></div>
<span class="t" style="left:830.8px;top:164px;font-size:9px;line-height:10px;color:#1a1a1a;transform:scaleX(0.887);">0. Planta Baja</span>
<svg class="b" style="left:816.6px;top:163.9px" width="12" height="9" viewBox="0 0 12 9"><path d="M.7 .8 L5.2 .8 L5.2 3.4 L11.2 3.4 L11.2 8.3 L.7 8.3 Z" fill="#e0a060" stroke="#5a3010" stroke-width="1.1"/></svg>
<span class="t" style="left:816.5px;top:176px;font-size:9px;line-height:10px;color:#1a1a1a;transform:scaleX(0.833);">Secciones</span>
<svg class="b" style="left:802.0px;top:175.7px" width="12" height="10" viewBox="0 0 12 10"><rect x=".8" y=".8" width="10.4" height="8.4" fill="#eeeef6" stroke="#34347e" stroke-width="1.15"/><rect x=".8" y=".6" width="10.4" height="1.5" fill="#34347e"/><rect x="4" y="4" width="4" height="3.4" fill="none" stroke="#222" stroke-width="1"/></svg>
<span class="t" style="left:816.5px;top:188px;font-size:9px;line-height:10px;color:#1a1a1a;transform:scaleX(0.853);">Alzados</span>
<svg class="b" style="left:802.0px;top:187.7px" width="12" height="10" viewBox="0 0 12 10"><rect x=".8" y=".8" width="10.4" height="8.4" fill="#eeeef6" stroke="#34347e" stroke-width="1.15"/><rect x=".8" y=".6" width="10.4" height="1.5" fill="#34347e"/><rect x="4" y="4" width="4" height="3.4" fill="none" stroke="#222" stroke-width="1"/></svg>
<svg class="b" style="left:789.8px;top:188.6px" width="8" height="8" viewBox="0 0 8 8"><rect x=".9" y=".9" width="6.2" height="6.2" fill="#fff" stroke="#9496a6" stroke-width="1"/><path d="M2.2 4 L5.8 4" stroke="#222" stroke-width="1"/></svg>
<span class="t" style="left:830.8px;top:200px;font-size:9px;line-height:10px;color:#1a1a1a;transform:scaleX(0.892);">E-01 Alzado Norte (Auto-Reconstrucción del Modelo)</span>
<svg class="b" style="left:816.6px;top:199.8px" width="12" height="11" viewBox="0 0 12 11"><path d="M.6 4.6 L6 .7 L11.4 4.6 L10 4.6 L10 10.2 L2 10.2 L2 4.6 Z" fill="#d9a25c" stroke="#6a4418" stroke-width="1"/><path d="M.6 4.6 L6 .7 L11.4 4.6" fill="none" stroke="#5a3a14" stroke-width="1.3"/><rect x="4.6" y="5.6" width="2.8" height="2.8" fill="#f8ecd0"/></svg>
<span class="t" style="left:830.8px;top:212px;font-size:9px;line-height:10px;color:#1a1a1a;transform:scaleX(0.888);">E-02 Alzado Este (Auto-Reconstrucción del Modelo)</span>
<svg class="b" style="left:816.6px;top:211.8px" width="12" height="11" viewBox="0 0 12 11"><path d="M.6 4.6 L6 .7 L11.4 4.6 L10 4.6 L10 10.2 L2 10.2 L2 4.6 Z" fill="#d9a25c" stroke="#6a4418" stroke-width="1"/><path d="M.6 4.6 L6 .7 L11.4 4.6" fill="none" stroke="#5a3a14" stroke-width="1.3"/><rect x="4.6" y="5.6" width="2.8" height="2.8" fill="#f8ecd0"/></svg>
<span class="t" style="left:830.8px;top:224px;font-size:9px;line-height:10px;color:#1a1a1a;transform:scaleX(0.886);">E-03 Alzado Sur (Auto-Reconstrucción del Modelo)</span>
<svg class="b" style="left:816.6px;top:223.8px" width="12" height="11" viewBox="0 0 12 11"><path d="M.6 4.6 L6 .7 L11.4 4.6 L10 4.6 L10 10.2 L2 10.2 L2 4.6 Z" fill="#d9a25c" stroke="#6a4418" stroke-width="1"/><path d="M.6 4.6 L6 .7 L11.4 4.6" fill="none" stroke="#5a3a14" stroke-width="1.3"/><rect x="4.6" y="5.6" width="2.8" height="2.8" fill="#f8ecd0"/></svg>
<span class="t" style="left:830.8px;top:236px;font-size:9px;line-height:10px;color:#1a1a1a;transform:scaleX(0.891);">E-04 Alzado Oeste (Auto-Reconstrucción del Modelo)</span>
<svg class="b" style="left:816.6px;top:235.8px" width="12" height="11" viewBox="0 0 12 11"><path d="M.6 4.6 L6 .7 L11.4 4.6 L10 4.6 L10 10.2 L2 10.2 L2 4.6 Z" fill="#d9a25c" stroke="#6a4418" stroke-width="1"/><path d="M.6 4.6 L6 .7 L11.4 4.6" fill="none" stroke="#5a3a14" stroke-width="1.3"/><rect x="4.6" y="5.6" width="2.8" height="2.8" fill="#f8ecd0"/></svg>
<span class="t" style="left:816.5px;top:248px;font-size:9px;line-height:10px;color:#1a1a1a;transform:scaleX(0.904);">Alzados Interiores</span>
<svg class="b" style="left:802.0px;top:247.7px" width="12" height="10" viewBox="0 0 12 10"><rect x=".8" y=".8" width="10.4" height="8.4" fill="#eeeef6" stroke="#34347e" stroke-width="1.15"/><rect x=".8" y=".6" width="10.4" height="1.5" fill="#34347e"/><rect x="3" y="4.4" width="6" height="3" fill="#555"/></svg>
<span class="t" style="left:816.5px;top:260px;font-size:9px;line-height:10px;color:#1a1a1a;transform:scaleX(0.899);">Hojas de Trabajo</span>
<svg class="b" style="left:802.0px;top:259.7px" width="12" height="10" viewBox="0 0 12 10"><rect x=".8" y=".8" width="10.4" height="8.4" fill="#eeeef6" stroke="#34347e" stroke-width="1.15"/><rect x=".8" y=".6" width="10.4" height="1.5" fill="#34347e"/><path d="M3.4 7.6 L6.6 3.6" stroke="#222" stroke-width="1.4"/></svg>
<span class="t" style="left:816.5px;top:272px;font-size:9px;line-height:10px;color:#1a1a1a;transform:scaleX(0.864);">Detalles</span>
<svg class="b" style="left:802.0px;top:271.7px" width="12" height="10" viewBox="0 0 12 10"><rect x=".8" y=".8" width="10.4" height="8.4" fill="#eeeef6" stroke="#34347e" stroke-width="1.15"/><rect x=".8" y=".6" width="10.4" height="1.5" fill="#34347e"/><rect x="5.6" y="4" width="3.4" height="3.6" fill="#555"/></svg>
<span class="t" style="left:816.5px;top:284px;font-size:9px;line-height:10px;color:#1a1a1a;transform:scaleX(0.868);">Documentos 3D</span>
<svg class="b" style="left:802.0px;top:283.7px" width="12" height="10" viewBox="0 0 12 10"><rect x=".8" y=".8" width="10.4" height="8.4" fill="#eeeef6" stroke="#34347e" stroke-width="1.15"/><rect x=".8" y=".6" width="10.4" height="1.5" fill="#34347e"/><path d="M3 4 L3 7.4 L5 7.4 M6.4 4 L9 4 M6.4 6 L9 6 M6.4 7.6 L9 7.6" stroke="#222" stroke-width=".9" fill="none"/></svg>
<span class="t" style="left:816.5px;top:296px;font-size:9px;line-height:10px;color:#1a1a1a;transform:scaleX(0.791);">3D</span>
<svg class="b" style="left:802.0px;top:295.7px" width="12" height="10" viewBox="0 0 12 10"><rect x=".8" y=".8" width="10.4" height="8.4" fill="#eeeef6" stroke="#34347e" stroke-width="1.15"/><rect x=".8" y=".6" width="10.4" height="1.5" fill="#34347e"/><rect x="4" y="3.6" width="3.6" height="4.2" fill="#222"/><path d="M8.4 4.4 L8.4 7" stroke="#222" stroke-width=".9"/></svg>
<svg class="b" style="left:789.8px;top:296.6px" width="8" height="8" viewBox="0 0 8 8"><rect x=".9" y=".9" width="6.2" height="6.2" fill="#fff" stroke="#9496a6" stroke-width="1"/><path d="M2.2 4 L5.8 4" stroke="#222" stroke-width="1"/></svg>
<span class="t" style="left:830.8px;top:308px;font-size:9px;line-height:10px;color:#1a1a1a;transform:scaleX(0.877);">Perspectiva Cónica</span>
<svg class="b" style="left:816.6px;top:307.3px" width="13" height="11" viewBox="0 0 13 11"><ellipse cx="5" cy="4.4" rx="4.4" ry="3.2" fill="#6a3a10" stroke="#222" stroke-width=".8"/><path d="M9.4 3 L12.4 1.8 L12.4 7 L9.4 5.8 Z" fill="#222"/><path d="M3 7 L1.5 10.5 M5 7.5 L5 10.5 M7 7 L8.5 10.5" stroke="#222" stroke-width="1"/></svg>
<span class="t" style="left:830.8px;top:320px;font-size:9px;line-height:10px;color:#1a1a1a;transform:scaleX(0.896);">Perspectiva Axonométrica</span>
<svg class="b" style="left:816.6px;top:319.3px" width="12" height="11" viewBox="0 0 12 11"><path d="M1 3.6 L7 .8 L11 3 L11 8 L5 10.4 L1 8 Z" fill="#c88848" stroke="#3a200a" stroke-width="1"/><path d="M1 3.6 L5 5.6 L11 3 M5 5.6 L5 10.4" fill="none" stroke="#3a200a" stroke-width=".9"/></svg>
<span class="t" style="left:816.5px;top:332px;font-size:9px;line-height:10px;color:#1a1a1a;transform:scaleX(0.832);">Esquemas</span>
<svg class="b" style="left:802.0px;top:331.7px" width="12" height="10" viewBox="0 0 12 10"><rect x=".8" y=".8" width="10.4" height="8.4" fill="#eeeef6" stroke="#34347e" stroke-width="1.15"/><rect x=".8" y=".6" width="10.4" height="1.5" fill="#34347e"/><path d="M3.4 3.6 L3.4 7.8 M5.2 3.6 L5.2 7.8 M7 3.6 L7 7.8 M8.8 3.6 L8.8 7.8" stroke="#222" stroke-width="1.1"/></svg>
<svg class="b" style="left:789.8px;top:332.6px" width="8" height="8" viewBox="0 0 8 8"><rect x=".9" y=".9" width="6.2" height="6.2" fill="#fff" stroke="#9496a6" stroke-width="1"/><path d="M2.2 4 L5.8 4" stroke="#222" stroke-width="1"/><path d="M4 2.2 L4 5.8" stroke="#222" stroke-width="1"/></svg>
<span class="t" style="left:816.5px;top:344px;font-size:9px;line-height:10px;color:#1a1a1a;transform:scaleX(0.899);">Índices de Proyecto</span>
<svg class="b" style="left:802.0px;top:343.7px" width="12" height="10" viewBox="0 0 12 10"><rect x=".8" y=".8" width="10.4" height="8.4" fill="#eeeef6" stroke="#34347e" stroke-width="1.15"/><rect x=".8" y=".6" width="10.4" height="1.5" fill="#34347e"/><path d="M3 4.2 L9 4.2" stroke="#222" stroke-width=".9"/></svg>
<svg class="b" style="left:789.8px;top:344.6px" width="8" height="8" viewBox="0 0 8 8"><rect x=".9" y=".9" width="6.2" height="6.2" fill="#fff" stroke="#9496a6" stroke-width="1"/><path d="M2.2 4 L5.8 4" stroke="#222" stroke-width="1"/><path d="M4 2.2 L4 5.8" stroke="#222" stroke-width="1"/></svg>
<span class="t" style="left:816.5px;top:356px;font-size:9px;line-height:10px;color:#1a1a1a;transform:scaleX(0.862);">Listados</span>
<svg class="b" style="left:802.0px;top:355.7px" width="12" height="10" viewBox="0 0 12 10"><rect x=".8" y=".8" width="10.4" height="8.4" fill="#eeeef6" stroke="#34347e" stroke-width="1.15"/><rect x=".8" y=".6" width="10.4" height="1.5" fill="#34347e"/><rect x="3.8" y="3.6" width="4.4" height="4.2" fill="none" stroke="#555" stroke-width=".9"/></svg>
<svg class="b" style="left:789.8px;top:356.6px" width="8" height="8" viewBox="0 0 8 8"><rect x=".9" y=".9" width="6.2" height="6.2" fill="#fff" stroke="#9496a6" stroke-width="1"/><path d="M2.2 4 L5.8 4" stroke="#222" stroke-width="1"/><path d="M4 2.2 L4 5.8" stroke="#222" stroke-width="1"/></svg>
<span class="t" style="left:816.5px;top:368px;font-size:9px;line-height:10px;color:#1a1a1a;transform:scaleX(0.982);">Info.</span>
<svg class="b" style="left:802.0px;top:367.7px" width="12" height="10" viewBox="0 0 12 10"><rect x=".8" y=".8" width="10.4" height="8.4" fill="#eeeef6" stroke="#34347e" stroke-width="1.15"/><rect x=".8" y=".6" width="10.4" height="1.5" fill="#34347e"/><rect x="3.8" y="3.6" width="4.4" height="4.2" fill="none" stroke="#555" stroke-width=".9"/></svg>
<svg class="b" style="left:789.8px;top:368.6px" width="8" height="8" viewBox="0 0 8 8"><rect x=".9" y=".9" width="6.2" height="6.2" fill="#fff" stroke="#9496a6" stroke-width="1"/><path d="M2.2 4 L5.8 4" stroke="#222" stroke-width="1"/></svg>
<span class="t" style="left:830.8px;top:380px;font-size:9px;line-height:10px;color:#1a1a1a;transform:scaleX(0.921);">Informe</span>
<svg class="b" style="left:817.6px;top:378.3px" width="10" height="12" viewBox="0 0 10 12"><rect x=".7" y=".7" width="8.6" height="10.6" fill="#f4f4f4" stroke="#333" stroke-width="1"/><path d="M2 3.2 L8 3.2 M2 5.4 L8 5.4 M2 7.6 L8 7.6 M2 9.6 L8 9.6" stroke="#555" stroke-width="1"/></svg>
<span class="t" style="left:830.8px;top:392px;font-size:9px;line-height:10px;color:#1a1a1a;transform:scaleX(0.897);">Notas de Proyecto</span>
<svg class="b" style="left:817.6px;top:390.3px" width="10" height="12" viewBox="0 0 10 12"><path d="M.7 .7 L6.4 .7 L9.3 3.4 L9.3 11.3 L.7 11.3 Z" fill="#fff" stroke="#222" stroke-width="1"/><path d="M2 9.6 L2 6.4 L4.6 4.6 L7.4 6.4 L7.4 9.6 Z" fill="#333"/></svg>
<span class="t" style="left:802.2px;top:404px;font-size:9px;line-height:10px;color:#1a1a1a;transform:scaleX(0.903);">Ayuda</span>
<svg class="b" style="left:787.3px;top:403.7px" width="12" height="10" viewBox="0 0 12 10"><rect x=".8" y=".8" width="10.4" height="8.4" fill="#eeeef6" stroke="#34347e" stroke-width="1.15"/><rect x=".8" y=".6" width="10.4" height="1.5" fill="#34347e"/><rect x="3.8" y="3.6" width="4.4" height="4.2" fill="none" stroke="#555" stroke-width=".9"/></svg>
<svg class="b" style="left:775.2px;top:404.6px" width="8" height="8" viewBox="0 0 8 8"><rect x=".9" y=".9" width="6.2" height="6.2" fill="#fff" stroke="#9496a6" stroke-width="1"/><path d="M2.2 4 L5.8 4" stroke="#222" stroke-width="1"/><path d="M4 2.2 L4 5.8" stroke="#222" stroke-width="1"/></svg>
<svg class="b" style="left:0;top:0;pointer-events:none" width="1024" height="576"><path d="M779.2 124.5 L779.2 404.5 M793.8 136.5 L793.8 368.5 M783.1 120.5 L786.3 120.5 M783.1 408.5 L786.3 408.5 M797.7 132.5 L801.0 132.5 M808.0 144.5 L815.6 144.5 M808.0 156.5 L815.6 156.5 M808.0 168.5 L815.6 168.5 M793.7 180.5 L801.0 180.5 M797.7 192.5 L801.0 192.5 M808.0 204.5 L815.6 204.5 M808.0 216.5 L815.6 216.5 M808.0 228.5 L815.6 228.5 M808.0 240.5 L815.6 240.5 M793.7 252.5 L801.0 252.5 M793.7 264.5 L801.0 264.5 M793.7 276.5 L801.0 276.5 M793.7 288.5 L801.0 288.5 M797.7 300.5 L801.0 300.5 M808.0 312.5 L815.6 312.5 M808.0 324.5 L815.6 324.5 M797.7 336.5 L801.0 336.5 M797.7 348.5 L801.0 348.5 M797.7 360.5 L801.0 360.5 M797.7 372.5 L801.0 372.5 M808.0 384.5 L815.6 384.5 M808.0 396.5 L815.6 396.5 M808.1 137.5 L808.1 168.5 M808.1 197.5 L808.1 240.5 M808.1 305.5 L808.1 324.5 M808.1 377.5 L808.1 396.5" stroke="#a8a8a8" stroke-width="1" stroke-dasharray="1 1" fill="none"/></svg>
<div class="b " style="left:771.0px;top:448.4px;width:253.0px;height:10.2px;background:#e4e3df"></div>
<div class="b raised" style="left:771.4px;top:448.6px;width:10.6px;height:10.0px;"></div>
<svg class="b" style="left:774.5px;top:450.8px" width="4" height="6" viewBox="0 0 4 6"><path d="M3.6 0 L3.6 6 L.4 3 Z" fill="#111"/></svg>
<div class="b raised" style="left:782.2px;top:448.6px;width:228.2px;height:10.0px;"></div>
<div class="b raised" style="left:1011.0px;top:448.6px;width:13.0px;height:10.0px;"></div>
<svg class="b" style="left:1015.5px;top:450.8px" width="4" height="6" viewBox="0 0 4 6"><path d="M.4 0 L.4 6 L3.6 3 Z" fill="#111"/></svg>
<div class="b " style="left:769.6px;top:458.6px;width:254.4px;height:1.0px;background:#6e6c68"></div>
<div class="b raised" style="left:991.0px;top:465.4px;width:15.6px;height:16.6px;"></div>
<svg class="b" style="left:993.0px;top:468.0px" width="12" height="11" viewBox="0 0 12 11"><path d="M.8 2.2 L4 2.2 L5 3.4 L9.6 3.4 L9.6 10 L.8 10 Z" fill="#e09848" stroke="#6a3a10" stroke-width="1"/><path d="M8.5 .5 L11.5 .5 L11.5 4.2" fill="#f8f080" stroke="#f8f080" stroke-width="1.2"/></svg>
<div class="b raised" style="left:1007.0px;top:465.4px;width:17.0px;height:16.6px;"></div>
<svg class="b" style="left:1010.0px;top:468.5px" width="11" height="10" viewBox="0 0 11 10"><path d="M1 1 L10 9 M10 1 L1 9" stroke="#e02020" stroke-width="1.7"/></svg>
<div class="b " style="left:769.6px;top:486.8px;width:254.4px;height:12.6px;background:linear-gradient(180deg,#ebeae7,#e0dfdb)"></div>
<svg class="b" style="left:779.4px;top:490.5px" width="7" height="5" viewBox="0 0 7 5"><path d="M0 0 L7 0 L3.5 4.6 Z" fill="#111"/></svg>
<span class="t" style="left:793.0px;top:488px;font-size:8.6px;line-height:10px;color:#1e1e1e;transform:scaleX(0.917);">Propiedades</span>
<svg class="b" style="left:770.5px;top:508.6px" width="7" height="6" viewBox="0 0 7 6"><path d="M.6 .6 L3.4 .6 L3.4 2.2 L6.4 2.2 L6.4 5.4 L.6 5.4 Z" fill="#e0a060" stroke="#8a4a20" stroke-width=".9"/></svg>
<div class="b " style="left:780.5px;top:504.0px;width:54.1px;height:12.0px;background:#d2d0cb;border:1px solid;border-color:#8c8a86 #f6f6f4 #f6f6f4 #8c8a86"></div>
<span class="t" style="left:782.5px;top:505px;font-size:8.6px;line-height:10px;color:#444;transform:scaleX(0.837);">0.</span>
<div class="b " style="left:837.0px;top:504.0px;width:187.0px;height:12.0px;background:#fff;border:1px solid;border-color:#6e6c68 #e8e7e3 #e8e7e3 #6e6c68"></div>
<span class="t" style="left:840.5px;top:505px;font-size:8.6px;line-height:10px;color:#1e1e1e;transform:scaleX(0.943);">Planta Baja</span>
<div class="b raised" style="left:780.5px;top:519.0px;width:234.1px;height:16.2px;"></div>
<span class="t" style="left:875.5px;top:522px;font-size:8.6px;line-height:10px;color:#1e1e1e;transform:scaleX(0.939);">Definiciones</span>
<div class="b " style="left:0.0px;top:540.0px;width:1024.0px;height:0.8px;background:#a3a19b"></div>
<div class="b " style="left:0.0px;top:540.8px;width:1024.0px;height:1.0px;background:#f6f6f4"></div>
<span class="t" style="left:1.2px;top:546px;font-size:8.8px;line-height:10px;color:#1e1e1e;transform:scaleX(0.911);">Entre primer Nodo de Área.</span>
<svg class="b" style="left:863.5px;top:547.0px" width="13" height="8" viewBox="0 0 13 8"><path d="M1.6 .8 L11.4 .8 L12.4 3 L12.4 6.6 L.6 6.6 L.6 3 Z" fill="#c8c8c8" stroke="#333" stroke-width="1"/><path d="M.6 3.2 L12.4 3.2" stroke="#333" stroke-width=".8"/></svg>
<span class="t" style="left:880.5px;top:546px;font-size:8.8px;line-height:10px;color:#1e1e1e;transform:scaleX(0.888);">C: 163.7 GB</span>
<svg class="b" style="left:939.5px;top:546.0px" width="9" height="10" viewBox="0 0 9 10"><rect x=".8" y=".8" width="7.4" height="8.4" rx="1.6" fill="#e8e8e8" stroke="#222" stroke-width="1.4"/></svg>
<span class="t" style="left:956.0px;top:546px;font-size:8.8px;line-height:10px;color:#1e1e1e;transform:scaleX(0.852);">2.44 GB</span>
</div></body></html>
